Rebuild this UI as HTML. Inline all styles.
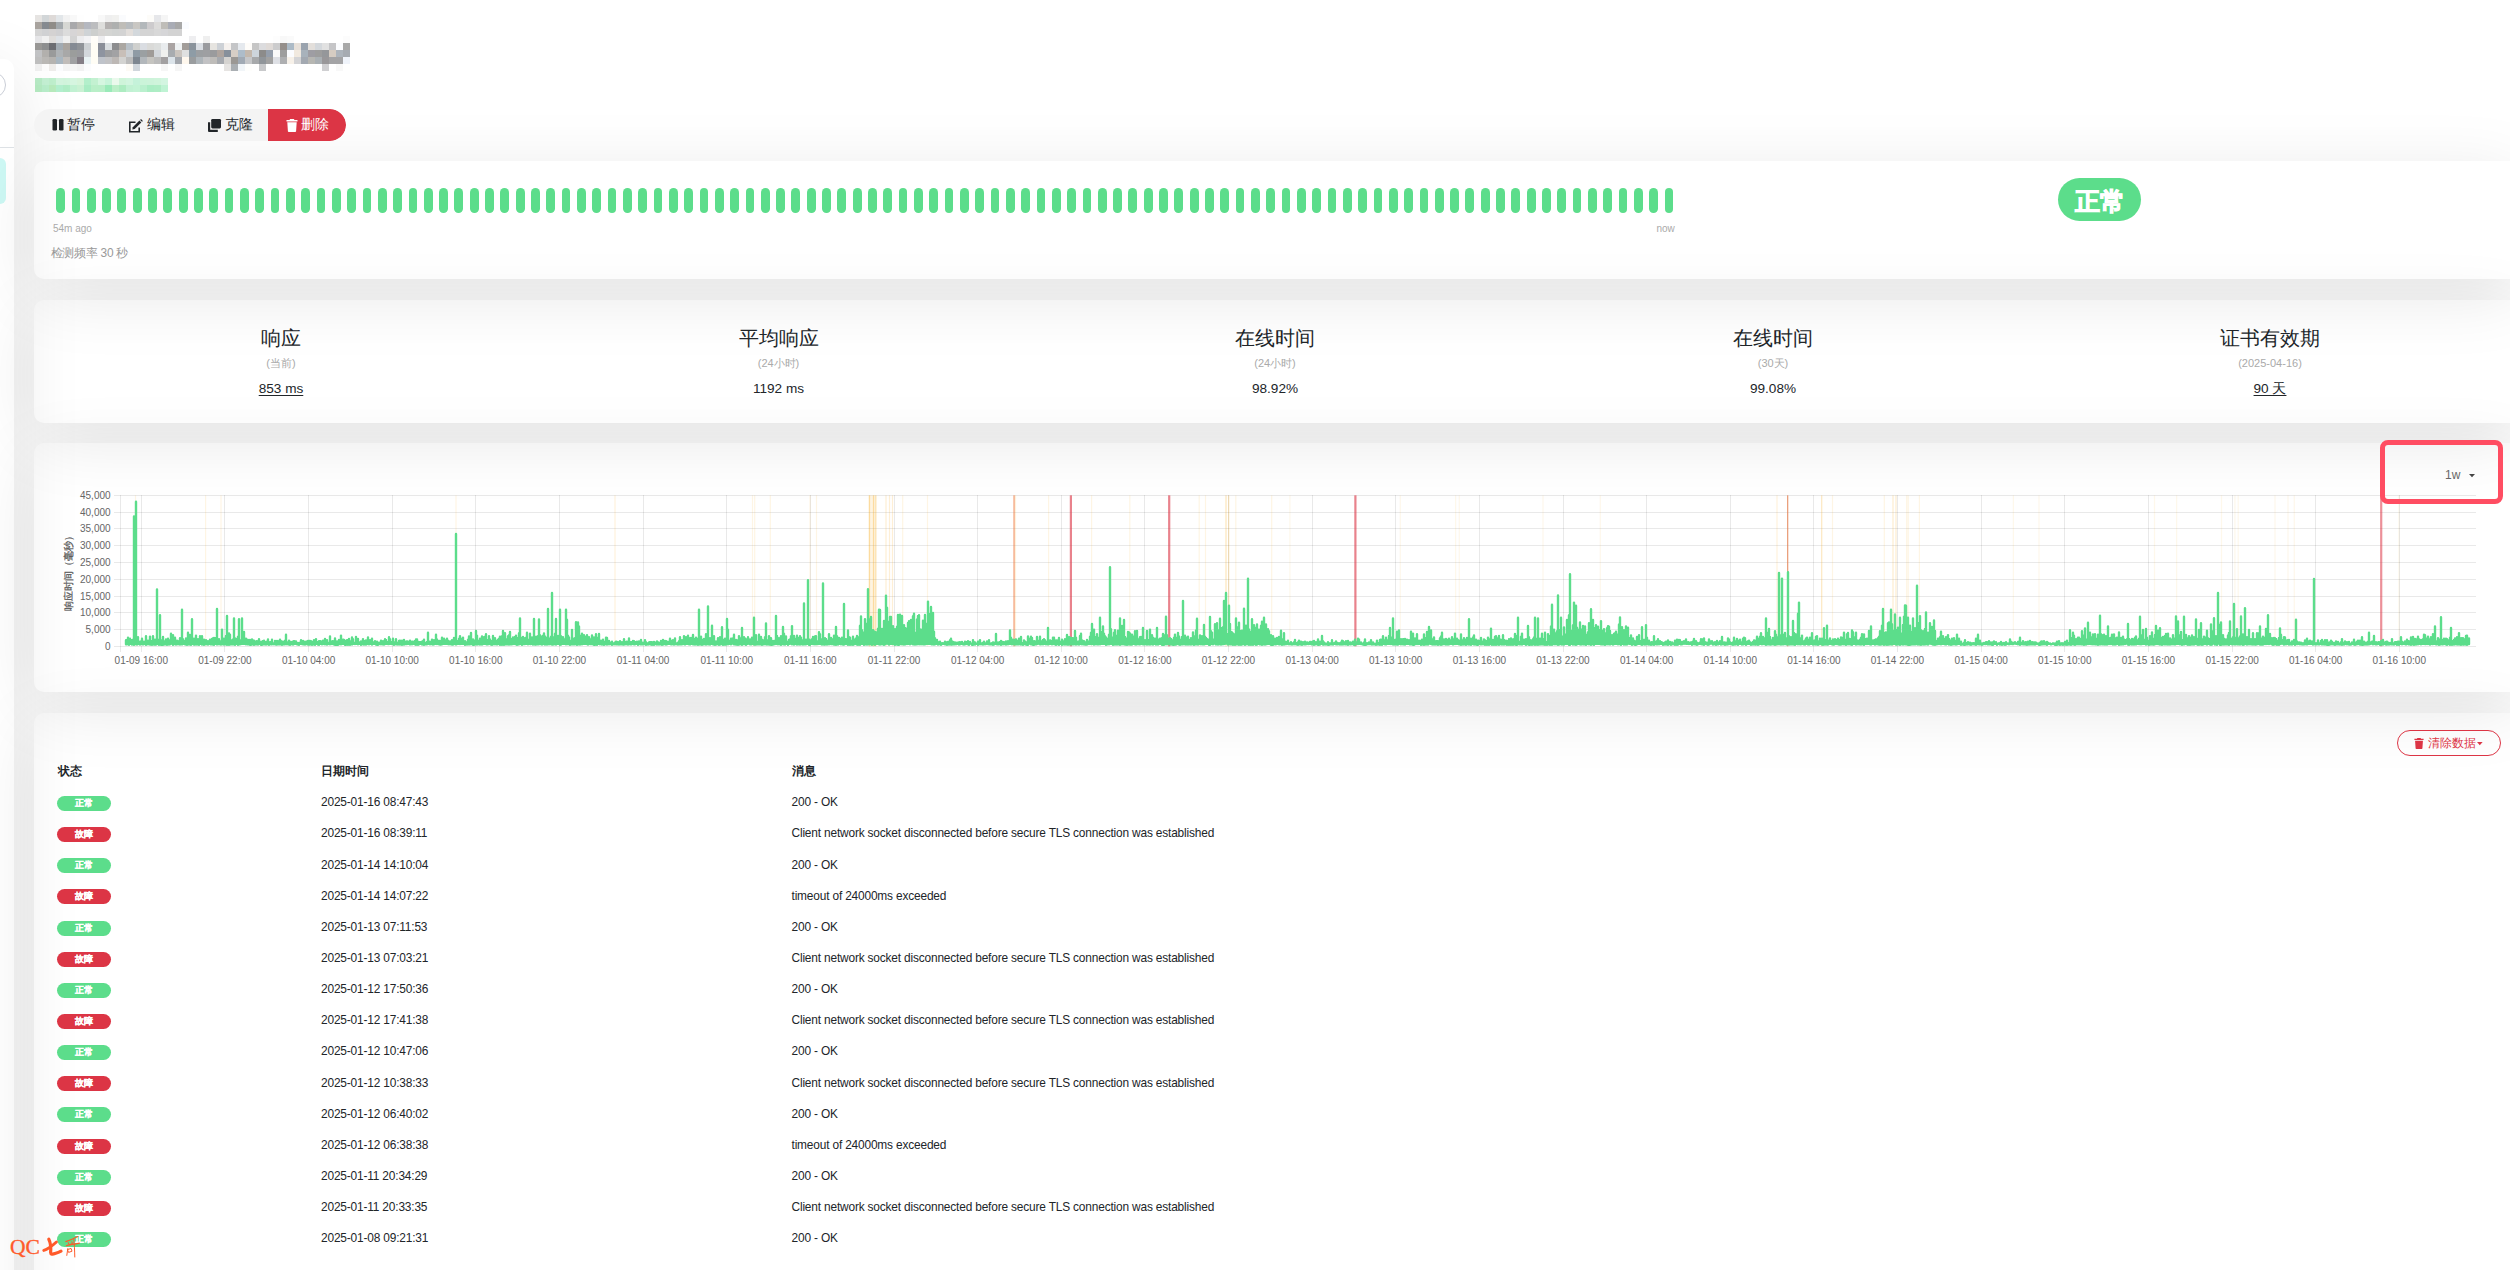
<!DOCTYPE html>
<html><head><meta charset="utf-8">
<style>
html,body{margin:0;padding:0}
body{width:2510px;height:1270px;overflow:hidden;position:relative;background:#fff;font-family:"Liberation Sans",sans-serif;color:#212529}
.abs{position:absolute}
.card{position:absolute;left:34px;width:2486px;background:#fff;border-radius:10px;z-index:2}
.shd{position:absolute;left:34px;width:2486px;border-radius:10px;box-shadow:0 15px 70px rgba(0,0,0,.1);z-index:8}
#list{position:absolute;left:-400px;top:59px;width:414px;height:1400px;background:#fff;border-radius:10px;overflow:hidden;z-index:1}
#lshd{position:absolute;left:-400px;top:59px;width:414px;height:1400px;border-radius:10px;box-shadow:0 15px 70px rgba(0,0,0,.1);z-index:8}
.beats i{position:absolute;top:188px;width:8.8px;height:25px;border-radius:4.4px;background:#5cdd8b}
.btng{position:absolute;left:34px;top:109px;width:312px;height:32px;border-radius:16px;background:#f4f4f4;overflow:hidden;z-index:9}
.btng span{position:absolute;top:0;height:32px;line-height:32px;font-size:13.6px;color:#212529}
.badge{position:absolute;left:57px;width:54px;height:15px;border-radius:8px;color:#fff;font-size:8.8px;font-weight:bold;text-align:center;line-height:15.5px;-webkit-text-stroke:0.25px #fff}
.bu{background:#5cdd8b}.bd{background:#dc3545}
.td{position:absolute;font-size:11.9px;line-height:15px;color:#212529;white-space:nowrap;letter-spacing:-0.17px}
.th{position:absolute;top:764px;font-size:11.9px;line-height:15px;font-weight:bold;white-space:nowrap}
.st{position:absolute;width:300px;text-align:center}
.st .t{position:absolute;left:0;width:300px;top:0;font-size:20.4px;line-height:24px}
.st .s{position:absolute;left:0;width:300px;top:29.5px;font-size:11px;line-height:14px;color:#aaa}
.st .v{position:absolute;left:0;width:300px;top:53.5px;font-size:13.6px;line-height:18px}
.st .v u{text-underline-offset:2px}
</style></head><body>
<div id="list">
  <div class="abs" style="left:0;top:13px;width:403.6px;height:23.5px;border:1px solid #c9cdd6;border-radius:14px"></div>
  <div class="abs" style="left:0;top:88px;width:414px;height:1px;background:#dee2e6"></div>
  <div class="abs" style="left:0;top:99px;width:406px;height:46px;background:#cdf8f4;border-radius:6px"></div>
</div>
<svg width="330" height="90" style="position:absolute;left:35px;top:15px" shape-rendering="crispEdges"><rect x="0" y="0" width="7" height="7" fill="#e6e4e2"/><rect x="7" y="0" width="7" height="7" fill="#d2d6d8"/><rect x="14" y="0" width="7" height="7" fill="#dedad8"/><rect x="21" y="0" width="7" height="7" fill="#e2e6e9"/><rect x="28" y="0" width="7" height="7" fill="#f2f2f2"/><rect x="35" y="0" width="7" height="7" fill="#f8f8f8"/><rect x="42" y="0" width="7" height="7" fill="#fefefe"/><rect x="63" y="0" width="7" height="7" fill="#f8f8f8"/><rect x="70" y="0" width="7" height="7" fill="#efefef"/><rect x="77" y="0" width="7" height="7" fill="#f1f1ef"/><rect x="84" y="0" width="7" height="7" fill="#fafbfd"/><rect x="112" y="0" width="7" height="7" fill="#fdfcf9"/><rect x="119" y="0" width="7" height="7" fill="#e6e7ea"/><rect x="126" y="0" width="7" height="7" fill="#f5f5f5"/><rect x="0" y="7" width="7" height="7" fill="#a8a39e"/><rect x="7" y="7" width="7" height="7" fill="#858a90"/><rect x="14" y="7" width="7" height="7" fill="#8f8c88"/><rect x="21" y="7" width="7" height="7" fill="#a3a9ad"/><rect x="28" y="7" width="7" height="7" fill="#d6d7d3"/><rect x="35" y="7" width="7" height="7" fill="#a9a9ab"/><rect x="42" y="7" width="7" height="7" fill="#b9b5b1"/><rect x="49" y="7" width="7" height="7" fill="#b5b8c0"/><rect x="56" y="7" width="7" height="7" fill="#bcbdbf"/><rect x="63" y="7" width="7" height="7" fill="#dededc"/><rect x="70" y="7" width="7" height="7" fill="#b4b1b0"/><rect x="77" y="7" width="7" height="7" fill="#aeb0af"/><rect x="84" y="7" width="7" height="7" fill="#bfbdb8"/><rect x="91" y="7" width="7" height="7" fill="#b8bcbf"/><rect x="98" y="7" width="7" height="7" fill="#c9c7c3"/><rect x="105" y="7" width="7" height="7" fill="#b3b8bb"/><rect x="112" y="7" width="7" height="7" fill="#cdcbcd"/><rect x="119" y="7" width="7" height="7" fill="#dcdbda"/><rect x="126" y="7" width="7" height="7" fill="#bfbdb8"/><rect x="133" y="7" width="7" height="7" fill="#a9acb5"/><rect x="140" y="7" width="7" height="7" fill="#a8a8a8"/><rect x="147" y="7" width="7" height="7" fill="#fafcff"/><rect x="0" y="14" width="7" height="7" fill="#d5d5d5"/><rect x="7" y="14" width="7" height="7" fill="#d0d1d3"/><rect x="14" y="14" width="7" height="7" fill="#d4d2d2"/><rect x="21" y="14" width="7" height="7" fill="#d0d0d2"/><rect x="28" y="14" width="7" height="7" fill="#dcdcdc"/><rect x="35" y="14" width="7" height="7" fill="#d7d5d6"/><rect x="42" y="14" width="7" height="7" fill="#dad6d3"/><rect x="49" y="14" width="7" height="7" fill="#cfd3d6"/><rect x="56" y="14" width="7" height="7" fill="#cdcfcd"/><rect x="63" y="14" width="7" height="7" fill="#d5d4d2"/><rect x="70" y="14" width="7" height="7" fill="#d4d5d3"/><rect x="77" y="14" width="7" height="7" fill="#d1d3d2"/><rect x="84" y="14" width="7" height="7" fill="#d3d3d3"/><rect x="91" y="14" width="7" height="7" fill="#e2dedb"/><rect x="98" y="14" width="7" height="7" fill="#d3d8dc"/><rect x="105" y="14" width="7" height="7" fill="#d4d4d4"/><rect x="112" y="14" width="7" height="7" fill="#d4d4d4"/><rect x="119" y="14" width="7" height="7" fill="#d8d8d8"/><rect x="126" y="14" width="7" height="7" fill="#d6d6d8"/><rect x="133" y="14" width="7" height="7" fill="#d3d3d3"/><rect x="140" y="14" width="7" height="7" fill="#d3d3d3"/><rect x="0" y="21" width="7" height="7" fill="#e6e6e8"/><rect x="7" y="21" width="7" height="7" fill="#f0f0f0"/><rect x="14" y="21" width="7" height="7" fill="#dfdddb"/><rect x="21" y="21" width="7" height="7" fill="#dde1e6"/><rect x="28" y="21" width="7" height="7" fill="#efefef"/><rect x="35" y="21" width="7" height="7" fill="#d3d3d3"/><rect x="42" y="21" width="7" height="7" fill="#ececee"/><rect x="49" y="21" width="7" height="7" fill="#f3f3f5"/><rect x="56" y="21" width="7" height="7" fill="#fffdf8"/><rect x="63" y="21" width="7" height="7" fill="#ededef"/><rect x="154" y="21" width="7" height="7" fill="#eeeef0"/><rect x="168" y="21" width="7" height="7" fill="#efefef"/><rect x="238" y="21" width="7" height="7" fill="#fdfdfd"/><rect x="245" y="21" width="7" height="7" fill="#f8f8f8"/><rect x="252" y="21" width="7" height="7" fill="#fafafa"/><rect x="308" y="21" width="7" height="7" fill="#fcfcfc"/><rect x="0" y="28" width="7" height="7" fill="#999896"/><rect x="7" y="28" width="7" height="7" fill="#8e8f90"/><rect x="14" y="28" width="7" height="7" fill="#6c6d72"/><rect x="21" y="28" width="7" height="7" fill="#a1aab2"/><rect x="28" y="28" width="7" height="7" fill="#a9a49f"/><rect x="35" y="28" width="7" height="7" fill="#858b94"/><rect x="42" y="28" width="7" height="7" fill="#8f9398"/><rect x="49" y="28" width="7" height="7" fill="#cdd1d4"/><rect x="56" y="28" width="7" height="7" fill="#fffdf5"/><rect x="63" y="28" width="7" height="7" fill="#8a8e98"/><rect x="70" y="28" width="7" height="7" fill="#d9dde0"/><rect x="77" y="28" width="7" height="7" fill="#8c8d8f"/><rect x="84" y="28" width="7" height="7" fill="#aba7a2"/><rect x="91" y="28" width="7" height="7" fill="#b8c0c7"/><rect x="98" y="28" width="7" height="7" fill="#cfd0ce"/><rect x="105" y="28" width="7" height="7" fill="#dadde2"/><rect x="112" y="28" width="7" height="7" fill="#dadad8"/><rect x="119" y="28" width="7" height="7" fill="#dcdedd"/><rect x="126" y="28" width="7" height="7" fill="#e9ecee"/><rect x="133" y="28" width="7" height="7" fill="#aaa4a3"/><rect x="140" y="28" width="7" height="7" fill="#eef1f2"/><rect x="147" y="28" width="7" height="7" fill="#a29d99"/><rect x="154" y="28" width="7" height="7" fill="#8a939c"/><rect x="161" y="28" width="7" height="7" fill="#d9dde3"/><rect x="168" y="28" width="7" height="7" fill="#9a9b9f"/><rect x="175" y="28" width="7" height="7" fill="#e6e4e0"/><rect x="182" y="28" width="7" height="7" fill="#cdd1d6"/><rect x="189" y="28" width="7" height="7" fill="#f5f1ee"/><rect x="196" y="28" width="7" height="7" fill="#c4c5c7"/><rect x="203" y="28" width="7" height="7" fill="#e5e9ee"/><rect x="210" y="28" width="7" height="7" fill="#fefcf9"/><rect x="217" y="28" width="7" height="7" fill="#c6c6c6"/><rect x="224" y="28" width="7" height="7" fill="#dcdcde"/><rect x="231" y="28" width="7" height="7" fill="#dfdad7"/><rect x="238" y="28" width="7" height="7" fill="#cccccd"/><rect x="245" y="28" width="7" height="7" fill="#958f8b"/><rect x="252" y="28" width="7" height="7" fill="#acbac6"/><rect x="259" y="28" width="7" height="7" fill="#e7e0d9"/><rect x="266" y="28" width="7" height="7" fill="#9aa3ae"/><rect x="273" y="28" width="7" height="7" fill="#e3dfdb"/><rect x="280" y="28" width="7" height="7" fill="#d4d8dc"/><rect x="287" y="28" width="7" height="7" fill="#e1e1e1"/><rect x="294" y="28" width="7" height="7" fill="#c5c5c7"/><rect x="301" y="28" width="7" height="7" fill="#fbfcfe"/><rect x="308" y="28" width="7" height="7" fill="#a8a8a8"/><rect x="0" y="35" width="7" height="7" fill="#c2c3c5"/><rect x="7" y="35" width="7" height="7" fill="#b3b1ae"/><rect x="14" y="35" width="7" height="7" fill="#9a9b9b"/><rect x="21" y="35" width="7" height="7" fill="#afb3b6"/><rect x="28" y="35" width="7" height="7" fill="#a8a8a8"/><rect x="35" y="35" width="7" height="7" fill="#9b9d9c"/><rect x="42" y="35" width="7" height="7" fill="#9a9b9f"/><rect x="49" y="35" width="7" height="7" fill="#d3d7dc"/><rect x="56" y="35" width="7" height="7" fill="#fffdf5"/><rect x="63" y="35" width="7" height="7" fill="#8e94a0"/><rect x="70" y="35" width="7" height="7" fill="#9c9d9f"/><rect x="77" y="35" width="7" height="7" fill="#a2a2a4"/><rect x="84" y="35" width="7" height="7" fill="#c8bfb8"/><rect x="91" y="35" width="7" height="7" fill="#cbd0d4"/><rect x="98" y="35" width="7" height="7" fill="#8f9ba5"/><rect x="105" y="35" width="7" height="7" fill="#9ba0a2"/><rect x="112" y="35" width="7" height="7" fill="#9f9b98"/><rect x="119" y="35" width="7" height="7" fill="#d3d7dc"/><rect x="126" y="35" width="7" height="7" fill="#eff0ee"/><rect x="133" y="35" width="7" height="7" fill="#a8acb0"/><rect x="140" y="35" width="7" height="7" fill="#cbc5bf"/><rect x="147" y="35" width="7" height="7" fill="#dfe0e0"/><rect x="154" y="35" width="7" height="7" fill="#8e9ca6"/><rect x="161" y="35" width="7" height="7" fill="#9c9fa2"/><rect x="168" y="35" width="7" height="7" fill="#9e9fa2"/><rect x="175" y="35" width="7" height="7" fill="#9a9b9d"/><rect x="182" y="35" width="7" height="7" fill="#aea49e"/><rect x="189" y="35" width="7" height="7" fill="#87909b"/><rect x="196" y="35" width="7" height="7" fill="#d7cec5"/><rect x="203" y="35" width="7" height="7" fill="#adbcc9"/><rect x="210" y="35" width="7" height="7" fill="#c3b8ad"/><rect x="217" y="35" width="7" height="7" fill="#cdd5dc"/><rect x="224" y="35" width="7" height="7" fill="#8c8b8a"/><rect x="231" y="35" width="7" height="7" fill="#959eab"/><rect x="238" y="35" width="7" height="7" fill="#fafafa"/><rect x="245" y="35" width="7" height="7" fill="#9e9e9e"/><rect x="252" y="35" width="7" height="7" fill="#fbfcff"/><rect x="259" y="35" width="7" height="7" fill="#f1e9df"/><rect x="266" y="35" width="7" height="7" fill="#a8b2bb"/><rect x="273" y="35" width="7" height="7" fill="#9e9da3"/><rect x="280" y="35" width="7" height="7" fill="#9d9d9d"/><rect x="287" y="35" width="7" height="7" fill="#95979a"/><rect x="294" y="35" width="7" height="7" fill="#d6ccc2"/><rect x="301" y="35" width="7" height="7" fill="#adb4bc"/><rect x="308" y="35" width="7" height="7" fill="#a6abb2"/><rect x="0" y="42" width="7" height="7" fill="#c0c0c0"/><rect x="7" y="42" width="7" height="7" fill="#bbb9b6"/><rect x="14" y="42" width="7" height="7" fill="#b6b4b1"/><rect x="21" y="42" width="7" height="7" fill="#a9b6c0"/><rect x="28" y="42" width="7" height="7" fill="#c0bcb9"/><rect x="35" y="42" width="7" height="7" fill="#a0a1a3"/><rect x="42" y="42" width="7" height="7" fill="#847e86"/><rect x="49" y="42" width="7" height="7" fill="#eaf3f5"/><rect x="56" y="42" width="7" height="7" fill="#fffdf5"/><rect x="63" y="42" width="7" height="7" fill="#bfc3ca"/><rect x="70" y="42" width="7" height="7" fill="#c2c2c4"/><rect x="77" y="42" width="7" height="7" fill="#bdb8b5"/><rect x="84" y="42" width="7" height="7" fill="#d3d3d1"/><rect x="91" y="42" width="7" height="7" fill="#bbbbbb"/><rect x="98" y="42" width="7" height="7" fill="#7d8690"/><rect x="105" y="42" width="7" height="7" fill="#b2b7bb"/><rect x="112" y="42" width="7" height="7" fill="#c5c4c0"/><rect x="119" y="42" width="7" height="7" fill="#bbbbbb"/><rect x="126" y="42" width="7" height="7" fill="#a2a0a1"/><rect x="133" y="42" width="7" height="7" fill="#dce4ea"/><rect x="140" y="42" width="7" height="7" fill="#a3a7ad"/><rect x="147" y="42" width="7" height="7" fill="#fff8ee"/><rect x="154" y="42" width="7" height="7" fill="#9a9d9f"/><rect x="161" y="42" width="7" height="7" fill="#adb4b9"/><rect x="168" y="42" width="7" height="7" fill="#c2c2c4"/><rect x="175" y="42" width="7" height="7" fill="#bebcb9"/><rect x="182" y="42" width="7" height="7" fill="#a6a9ae"/><rect x="189" y="42" width="7" height="7" fill="#d5d3d0"/><rect x="196" y="42" width="7" height="7" fill="#9b9894"/><rect x="203" y="42" width="7" height="7" fill="#a1aab4"/><rect x="210" y="42" width="7" height="7" fill="#c6c7c9"/><rect x="217" y="42" width="7" height="7" fill="#a7a9ab"/><rect x="224" y="42" width="7" height="7" fill="#90959a"/><rect x="231" y="42" width="7" height="7" fill="#a1a1a1"/><rect x="238" y="42" width="7" height="7" fill="#dee0e5"/><rect x="245" y="42" width="7" height="7" fill="#aeafb1"/><rect x="252" y="42" width="7" height="7" fill="#f7f1e9"/><rect x="259" y="42" width="7" height="7" fill="#d4d4d6"/><rect x="266" y="42" width="7" height="7" fill="#a3a9b1"/><rect x="273" y="42" width="7" height="7" fill="#b6b6b2"/><rect x="280" y="42" width="7" height="7" fill="#a9afb3"/><rect x="287" y="42" width="7" height="7" fill="#999799"/><rect x="294" y="42" width="7" height="7" fill="#a3a3a5"/><rect x="301" y="42" width="7" height="7" fill="#a3a3a5"/><rect x="308" y="42" width="7" height="7" fill="#f0f4fb"/><rect x="0" y="49" width="7" height="7" fill="#f1f1f1"/><rect x="7" y="49" width="7" height="7" fill="#fdfdfd"/><rect x="14" y="49" width="7" height="7" fill="#efedeb"/><rect x="21" y="49" width="7" height="7" fill="#fbfcfe"/><rect x="28" y="49" width="7" height="7" fill="#f4f4f4"/><rect x="35" y="49" width="7" height="7" fill="#f6f6f6"/><rect x="42" y="49" width="7" height="7" fill="#f2f2f2"/><rect x="49" y="49" width="7" height="7" fill="#fbfcfd"/><rect x="91" y="49" width="7" height="7" fill="#fdfaf5"/><rect x="98" y="49" width="7" height="7" fill="#d0d6dc"/><rect x="126" y="49" width="7" height="7" fill="#f6f6f6"/><rect x="140" y="49" width="7" height="7" fill="#f5f5f5"/><rect x="189" y="49" width="7" height="7" fill="#e6e4e2"/><rect x="196" y="49" width="7" height="7" fill="#aaafb3"/><rect x="203" y="49" width="7" height="7" fill="#f1f5f8"/><rect x="210" y="49" width="7" height="7" fill="#fefefc"/><rect x="224" y="49" width="7" height="7" fill="#c8c9cb"/><rect x="287" y="49" width="7" height="7" fill="#d0d0d2"/><rect x="301" y="49" width="7" height="7" fill="#f8f8f8"/><rect x="0" y="63" width="7" height="7" fill="#b8ebc6"/><rect x="7" y="63" width="7" height="7" fill="#c4f0d3"/><rect x="14" y="63" width="7" height="7" fill="#bfefcd"/><rect x="21" y="63" width="7" height="7" fill="#d3f4de"/><rect x="28" y="63" width="7" height="7" fill="#d1f4dc"/><rect x="35" y="63" width="7" height="7" fill="#d6f5e0"/><rect x="42" y="63" width="7" height="7" fill="#d6f4da"/><rect x="49" y="63" width="7" height="7" fill="#b3efcb"/><rect x="56" y="63" width="7" height="7" fill="#c3f1d1"/><rect x="63" y="63" width="7" height="7" fill="#d5f6e0"/><rect x="70" y="63" width="7" height="7" fill="#c8f4da"/><rect x="77" y="63" width="7" height="7" fill="#eaf9ec"/><rect x="84" y="63" width="7" height="7" fill="#cff4da"/><rect x="91" y="63" width="7" height="7" fill="#d2f5df"/><rect x="98" y="63" width="7" height="7" fill="#c5f2da"/><rect x="105" y="63" width="7" height="7" fill="#cbf4d9"/><rect x="112" y="63" width="7" height="7" fill="#cdf3da"/><rect x="119" y="63" width="7" height="7" fill="#cff4db"/><rect x="126" y="63" width="7" height="7" fill="#d3f5e1"/><rect x="0" y="70" width="7" height="7" fill="#b5ebc2"/><rect x="7" y="70" width="7" height="7" fill="#b9eecb"/><rect x="14" y="70" width="7" height="7" fill="#b8ebbd"/><rect x="21" y="70" width="7" height="7" fill="#b3efce"/><rect x="28" y="70" width="7" height="7" fill="#b0edc6"/><rect x="35" y="70" width="7" height="7" fill="#c1f1d2"/><rect x="42" y="70" width="7" height="7" fill="#c9f1d3"/><rect x="49" y="70" width="7" height="7" fill="#a9ecc4"/><rect x="56" y="70" width="7" height="7" fill="#b9efc8"/><rect x="63" y="70" width="7" height="7" fill="#b8efc8"/><rect x="70" y="70" width="7" height="7" fill="#9aeab9"/><rect x="77" y="70" width="7" height="7" fill="#bbefc8"/><rect x="84" y="70" width="7" height="7" fill="#adecc1"/><rect x="91" y="70" width="7" height="7" fill="#c1f1d3"/><rect x="98" y="70" width="7" height="7" fill="#c3f3d5"/><rect x="105" y="70" width="7" height="7" fill="#baf0ce"/><rect x="112" y="70" width="7" height="7" fill="#abedc4"/><rect x="119" y="70" width="7" height="7" fill="#aeedc5"/><rect x="126" y="70" width="7" height="7" fill="#bff3d4"/></svg>
<div class="btng">
  <span style="left:17px"><svg width="13" height="12" style="position:absolute;left:0.5px;top:10px" viewBox="0 0 13 12"><rect x="0.5" y="0" width="4.5" height="11.5" rx="1.2" fill="#212529"/><rect x="7" y="0" width="4.5" height="11.5" rx="1.2" fill="#212529"/></svg><b style="position:absolute;left:16px;font-weight:normal;white-space:nowrap">暂停</b></span>
  <span style="left:94px"><svg width="16" height="14" style="position:absolute;left:0;top:9.5px" viewBox="0 0 16 14"><path d="M1 2.5h6.5v1.6H2.6v7.8h7.8V8.5H12v5H1z" fill="#212529"/><path d="M4.8 8.2l6.6-6.6 1.9 1.9-6.6 6.6-2.4.5z" fill="#212529"/><path d="M12.1 0.9l0.9-0.9 1.9 1.9-0.9 0.9z" fill="#212529"/></svg><b style="position:absolute;left:18.8px;font-weight:normal;white-space:nowrap">编辑</b></span>
  <span style="left:174px"><svg width="14" height="13" style="position:absolute;left:0;top:10px" viewBox="0 0 14 13"><rect x="3.2" y="0" width="9.8" height="9.4" rx="1.3" fill="#212529"/><path d="M0 3.2h2.2v7.6h7.6V13H1.3C.6 13 0 12.4 0 11.7z" fill="#212529"/></svg><b style="position:absolute;left:17px;font-weight:normal;white-space:nowrap">克隆</b></span>
  <div class="abs" style="left:234px;top:0;width:78px;height:32px;background:#dc3545;border-radius:0 16px 16px 0"></div>
  <span style="left:252px;color:#fff"><svg width="12" height="13" style="position:absolute;left:0;top:9.5px" viewBox="0 0 12 13"><path d="M3.6 0.9L4 0h4l.4.9H11.5v1.5H.5V.9z" fill="#fff"/><path d="M1.3 3.2h9.4l-.6 9c0 .5-.4.8-.9.8H2.8c-.5 0-.9-.3-.9-.8z" fill="#fff"/></svg><b style="position:absolute;left:15px;font-weight:normal;white-space:nowrap;color:#fff">删除</b></span>
</div>

<div class="card" style="top:161px;height:118px"></div>
<div class="card" style="top:300px;height:123px"></div>
<div class="card" style="top:443px;height:249px"></div>
<div class="card" style="top:713px;height:700px"></div>
<div id="lshd"></div>
<div class="shd" style="top:161px;height:118px"></div>
<div class="shd" style="top:300px;height:123px"></div>
<div class="shd" style="top:443px;height:249px"></div>
<div class="shd" style="top:713px;height:700px"></div>

<div class="abs" style="left:0;top:0;width:2510px;height:1270px;z-index:10">
<div class="beats"><i style="left:56.20px"></i><i style="left:71.52px"></i><i style="left:86.84px"></i><i style="left:102.15px"></i><i style="left:117.47px"></i><i style="left:132.79px"></i><i style="left:148.11px"></i><i style="left:163.43px"></i><i style="left:178.74px"></i><i style="left:194.06px"></i><i style="left:209.38px"></i><i style="left:224.70px"></i><i style="left:240.02px"></i><i style="left:255.33px"></i><i style="left:270.65px"></i><i style="left:285.97px"></i><i style="left:301.29px"></i><i style="left:316.61px"></i><i style="left:331.92px"></i><i style="left:347.24px"></i><i style="left:362.56px"></i><i style="left:377.88px"></i><i style="left:393.20px"></i><i style="left:408.51px"></i><i style="left:423.83px"></i><i style="left:439.15px"></i><i style="left:454.47px"></i><i style="left:469.79px"></i><i style="left:485.10px"></i><i style="left:500.42px"></i><i style="left:515.74px"></i><i style="left:531.06px"></i><i style="left:546.38px"></i><i style="left:561.69px"></i><i style="left:577.01px"></i><i style="left:592.33px"></i><i style="left:607.65px"></i><i style="left:622.97px"></i><i style="left:638.28px"></i><i style="left:653.60px"></i><i style="left:668.92px"></i><i style="left:684.24px"></i><i style="left:699.56px"></i><i style="left:714.87px"></i><i style="left:730.19px"></i><i style="left:745.51px"></i><i style="left:760.83px"></i><i style="left:776.15px"></i><i style="left:791.46px"></i><i style="left:806.78px"></i><i style="left:822.10px"></i><i style="left:837.42px"></i><i style="left:852.74px"></i><i style="left:868.05px"></i><i style="left:883.37px"></i><i style="left:898.69px"></i><i style="left:914.01px"></i><i style="left:929.33px"></i><i style="left:944.64px"></i><i style="left:959.96px"></i><i style="left:975.28px"></i><i style="left:990.60px"></i><i style="left:1005.92px"></i><i style="left:1021.23px"></i><i style="left:1036.55px"></i><i style="left:1051.87px"></i><i style="left:1067.19px"></i><i style="left:1082.51px"></i><i style="left:1097.82px"></i><i style="left:1113.14px"></i><i style="left:1128.46px"></i><i style="left:1143.78px"></i><i style="left:1159.10px"></i><i style="left:1174.41px"></i><i style="left:1189.73px"></i><i style="left:1205.05px"></i><i style="left:1220.37px"></i><i style="left:1235.69px"></i><i style="left:1251.00px"></i><i style="left:1266.32px"></i><i style="left:1281.64px"></i><i style="left:1296.96px"></i><i style="left:1312.28px"></i><i style="left:1327.59px"></i><i style="left:1342.91px"></i><i style="left:1358.23px"></i><i style="left:1373.55px"></i><i style="left:1388.87px"></i><i style="left:1404.18px"></i><i style="left:1419.50px"></i><i style="left:1434.82px"></i><i style="left:1450.14px"></i><i style="left:1465.46px"></i><i style="left:1480.77px"></i><i style="left:1496.09px"></i><i style="left:1511.41px"></i><i style="left:1526.73px"></i><i style="left:1542.05px"></i><i style="left:1557.36px"></i><i style="left:1572.68px"></i><i style="left:1588.00px"></i><i style="left:1603.32px"></i><i style="left:1618.64px"></i><i style="left:1633.95px"></i><i style="left:1649.27px"></i><i style="left:1664.59px"></i></div>
<div class="abs" style="left:53px;top:223px;font-size:10px;line-height:12px;color:#aaa">54m ago</div>
<div class="abs" style="left:1656.5px;top:223px;font-size:10px;line-height:12px;color:#aaa">now</div>
<div class="abs" style="left:50.5px;top:245.5px;font-size:11.9px;line-height:15px;color:#999;white-space:nowrap;letter-spacing:-0.25px">检测频率 30 秒</div>
<div class="abs" style="left:2058px;top:178px;width:83px;height:43px;border-radius:22px;background:#5cdd8b;color:#fff;font-weight:bold;font-size:24.5px;line-height:47px;text-align:center;-webkit-text-stroke:0.9px #fff">正常</div>

<div class="st" style="left:131px;top:326px"><div class="t">响应</div><div class="s">(当前)</div><div class="v"><u>853 ms</u></div></div>
<div class="st" style="left:628.5px;top:326px"><div class="t">平均响应</div><div class="s">(24小时)</div><div class="v">1192 ms</div></div>
<div class="st" style="left:1125px;top:326px"><div class="t">在线时间</div><div class="s">(24小时)</div><div class="v">98.92%</div></div>
<div class="st" style="left:1623px;top:326px"><div class="t">在线时间</div><div class="s">(30天)</div><div class="v">99.08%</div></div>
<div class="st" style="left:2120px;top:326px"><div class="t">证书有效期</div><div class="s">(2025-04-16)</div><div class="v"><u>90 天</u></div></div>

<svg width="2510" height="1270" style="position:absolute;left:0;top:0"><g stroke="rgba(0,0,0,0.085)" stroke-width="1" shape-rendering="crispEdges"><line x1="113.8" y1="495.3" x2="2476" y2="495.3"/><line x1="113.8" y1="512.1" x2="2476" y2="512.1"/><line x1="113.8" y1="528.9" x2="2476" y2="528.9"/><line x1="113.8" y1="545.6" x2="2476" y2="545.6"/><line x1="113.8" y1="562.4" x2="2476" y2="562.4"/><line x1="113.8" y1="579.2" x2="2476" y2="579.2"/><line x1="113.8" y1="596.0" x2="2476" y2="596.0"/><line x1="113.8" y1="612.8" x2="2476" y2="612.8"/><line x1="113.8" y1="629.5" x2="2476" y2="629.5"/><line x1="113.8" y1="646.3" x2="2476" y2="646.3"/><line x1="120.4" y1="495.3" x2="120.4" y2="652"/><line x1="141.3" y1="495.3" x2="141.3" y2="652"/><line x1="224.9" y1="495.3" x2="224.9" y2="652"/><line x1="308.6" y1="495.3" x2="308.6" y2="652"/><line x1="392.2" y1="495.3" x2="392.2" y2="652"/><line x1="475.8" y1="495.3" x2="475.8" y2="652"/><line x1="559.5" y1="495.3" x2="559.5" y2="652"/><line x1="643.1" y1="495.3" x2="643.1" y2="652"/><line x1="726.7" y1="495.3" x2="726.7" y2="652"/><line x1="810.3" y1="495.3" x2="810.3" y2="652"/><line x1="894.0" y1="495.3" x2="894.0" y2="652"/><line x1="977.6" y1="495.3" x2="977.6" y2="652"/><line x1="1061.2" y1="495.3" x2="1061.2" y2="652"/><line x1="1144.9" y1="495.3" x2="1144.9" y2="652"/><line x1="1228.5" y1="495.3" x2="1228.5" y2="652"/><line x1="1312.1" y1="495.3" x2="1312.1" y2="652"/><line x1="1395.7" y1="495.3" x2="1395.7" y2="652"/><line x1="1479.4" y1="495.3" x2="1479.4" y2="652"/><line x1="1563.0" y1="495.3" x2="1563.0" y2="652"/><line x1="1646.6" y1="495.3" x2="1646.6" y2="652"/><line x1="1730.3" y1="495.3" x2="1730.3" y2="652"/><line x1="1813.9" y1="495.3" x2="1813.9" y2="652"/><line x1="1897.5" y1="495.3" x2="1897.5" y2="652"/><line x1="1981.2" y1="495.3" x2="1981.2" y2="652"/><line x1="2064.8" y1="495.3" x2="2064.8" y2="652"/><line x1="2148.4" y1="495.3" x2="2148.4" y2="652"/><line x1="2232.1" y1="495.3" x2="2232.1" y2="652"/><line x1="2315.7" y1="495.3" x2="2315.7" y2="652"/><line x1="2399.3" y1="495.3" x2="2399.3" y2="652"/></g><rect x="134.9" y="495.3" width="1.2" height="151" fill="rgba(248,163,6,0.11)"/><rect x="205.0" y="495.3" width="1.2" height="151" fill="rgba(248,163,6,0.11)"/><rect x="220.4" y="495.3" width="1.2" height="151" fill="rgba(248,163,6,0.11)"/><rect x="455.4" y="495.3" width="1.2" height="151" fill="rgba(248,163,6,0.11)"/><rect x="614.4" y="495.3" width="1.2" height="151" fill="rgba(248,163,6,0.14)"/><rect x="751.9" y="495.3" width="1.2" height="151" fill="rgba(248,163,6,0.11)"/><rect x="754.1" y="495.3" width="1.2" height="151" fill="rgba(248,163,6,0.11)"/><rect x="769.7" y="495.3" width="1.2" height="151" fill="rgba(248,163,6,0.11)"/><rect x="809.4" y="495.3" width="1.2" height="151" fill="rgba(248,163,6,0.11)"/><rect x="815.9" y="495.3" width="1.2" height="151" fill="rgba(248,163,6,0.11)"/><rect x="868.9" y="495.3" width="1.2" height="151" fill="rgba(248,163,6,0.30)"/><rect x="872.9" y="495.3" width="1.2" height="151" fill="rgba(248,163,6,0.30)"/><rect x="874.9" y="495.3" width="1.2" height="151" fill="rgba(248,163,6,0.19)"/><rect x="885.4" y="495.3" width="1.2" height="151" fill="rgba(248,163,6,0.17)"/><rect x="888.9" y="495.3" width="1.2" height="151" fill="rgba(248,163,6,0.17)"/><rect x="891.9" y="495.3" width="1.2" height="151" fill="rgba(248,163,6,0.17)"/><rect x="902.1" y="495.3" width="1.2" height="151" fill="rgba(248,163,6,0.11)"/><rect x="926.9" y="495.3" width="1.2" height="151" fill="rgba(248,163,6,0.11)"/><rect x="1014.9" y="495.3" width="1.2" height="151" fill="rgba(248,163,6,0.14)"/><rect x="1048.0" y="495.3" width="1.2" height="151" fill="rgba(248,163,6,0.11)"/><rect x="1091.0" y="495.3" width="1.2" height="151" fill="rgba(248,163,6,0.11)"/><rect x="1129.2" y="495.3" width="1.2" height="151" fill="rgba(248,163,6,0.11)"/><rect x="1198.6" y="495.3" width="1.2" height="151" fill="rgba(248,163,6,0.11)"/><rect x="1204.9" y="495.3" width="1.2" height="151" fill="rgba(248,163,6,0.11)"/><rect x="1225.4" y="495.3" width="1.2" height="151" fill="rgba(248,163,6,0.28)"/><rect x="1228.1" y="495.3" width="1.2" height="151" fill="rgba(248,163,6,0.25)"/><rect x="1235.2" y="495.3" width="1.2" height="151" fill="rgba(248,163,6,0.11)"/><rect x="1271.1" y="495.3" width="1.2" height="151" fill="rgba(248,163,6,0.11)"/><rect x="1289.3" y="495.3" width="1.2" height="151" fill="rgba(248,163,6,0.08)"/><rect x="1399.7" y="495.3" width="1.2" height="151" fill="rgba(248,163,6,0.08)"/><rect x="1455.0" y="495.3" width="1.2" height="151" fill="rgba(248,163,6,0.08)"/><rect x="1458.7" y="495.3" width="1.2" height="151" fill="rgba(248,163,6,0.08)"/><rect x="1542.4" y="495.3" width="1.2" height="151" fill="rgba(248,163,6,0.08)"/><rect x="1599.7" y="495.3" width="1.2" height="151" fill="rgba(248,163,6,0.08)"/><rect x="1776.4" y="495.3" width="1.2" height="151" fill="rgba(248,163,6,0.14)"/><rect x="1821.1" y="495.3" width="1.2" height="151" fill="rgba(248,163,6,0.25)"/><rect x="1831.9" y="495.3" width="1.2" height="151" fill="rgba(248,163,6,0.11)"/><rect x="1883.7" y="495.3" width="1.2" height="151" fill="rgba(248,163,6,0.11)"/><rect x="1892.4" y="495.3" width="1.2" height="151" fill="rgba(248,163,6,0.19)"/><rect x="1895.4" y="495.3" width="1.2" height="151" fill="rgba(248,163,6,0.19)"/><rect x="1906.1" y="495.3" width="1.2" height="151" fill="rgba(248,163,6,0.11)"/><rect x="1907.6" y="495.3" width="1.2" height="151" fill="rgba(248,163,6,0.11)"/><rect x="1918.8" y="495.3" width="1.2" height="151" fill="rgba(248,163,6,0.11)"/><rect x="2012.8" y="495.3" width="1.2" height="151" fill="rgba(248,163,6,0.08)"/><rect x="2038.4" y="495.3" width="1.2" height="151" fill="rgba(248,163,6,0.08)"/><rect x="2153.9" y="495.3" width="1.2" height="151" fill="rgba(248,163,6,0.08)"/><rect x="2176.0" y="495.3" width="1.2" height="151" fill="rgba(248,163,6,0.08)"/><rect x="2220.9" y="495.3" width="1.2" height="151" fill="rgba(248,163,6,0.08)"/><rect x="2234.3" y="495.3" width="1.2" height="151" fill="rgba(248,163,6,0.08)"/><rect x="2237.6" y="495.3" width="1.2" height="151" fill="rgba(248,163,6,0.08)"/><rect x="2274.4" y="495.3" width="1.2" height="151" fill="rgba(248,163,6,0.08)"/><rect x="2287.4" y="495.3" width="1.2" height="151" fill="rgba(248,163,6,0.08)"/><rect x="2293.7" y="495.3" width="1.2" height="151" fill="rgba(248,163,6,0.08)"/><rect x="2398.3" y="495.3" width="1.2" height="151" fill="rgba(248,163,6,0.08)"/><rect x="1069.8" y="495.3" width="2.2" height="151" fill="rgba(220,53,69,0.62)"/><rect x="1168.1" y="495.3" width="2.2" height="151" fill="rgba(220,53,69,0.62)"/><rect x="1354.3" y="495.3" width="2.2" height="151" fill="rgba(220,53,69,0.62)"/><rect x="2380.1" y="495.3" width="2.2" height="151" fill="rgba(220,53,69,0.55)"/><rect x="868.5" y="495.3" width="8.5" height="151" fill="rgba(248,163,6,0.12)"/><rect x="1787" y="495.3" width="1.3" height="151" fill="rgba(225,120,70,0.7)"/><rect x="1013.2" y="495.3" width="1.8" height="151" fill="rgba(240,120,60,0.5)"/><path d="M126 644.2V640.3M127 644.2V639.9M128 644.0V637.8M129 644.8V639.4M130 643.6V638.7M131 643.9V639.9M132 644.6V642.2M133 644.4V639.8M134 644.8V516.5M135 643.9V635.3M136 644.1V501.7M137 644.6V638.0M138 644.1V637.2M139 643.9V642.7M140 644.5V641.6M141 643.7V641.4M142 644.1V638.8M143 644.4V642.7M144 643.9V641.7M145 644.1V643.5M146 644.8V636.2M147 644.0V641.1M148 644.3V640.6M149 644.1V641.7M150 644.6V636.6M151 644.6V641.0M152 644.7V640.9M153 643.7V636.3M154 644.6V642.2M155 644.5V639.6M156 644.6V641.5M157 643.8V589.5M158 644.0V640.2M159 644.7V639.7M160 643.6V615.3M161 644.8V640.2M162 644.7V642.3M163 644.7V637.0M164 644.6V641.3M165 644.3V641.1M166 644.3V639.4M167 644.7V642.7M168 644.3V638.8M169 644.5V641.0M170 644.2V640.1M171 643.6V633.7M172 643.8V641.6M173 644.7V635.1M174 644.1V641.4M175 644.0V637.8M176 644.6V641.8M177 643.9V640.8M178 644.2V641.3M179 644.1V642.7M180 644.5V638.3M181 643.9V640.1M182 644.4V609.7M183 643.8V639.3M184 643.8V642.3M185 644.2V641.0M186 644.6V638.4M187 644.7V641.7M188 644.6V632.8M189 643.8V636.9M190 644.5V635.0M191 644.7V639.4M192 644.1V619.3M193 643.6V639.3M194 644.5V638.8M195 644.5V641.2M196 644.2V635.6M197 644.5V641.6M198 644.3V639.1M199 644.7V640.9M200 643.8V636.2M201 643.6V639.8M202 644.6V636.3M203 643.7V639.6M204 644.7V639.8M205 644.1V641.2M206 644.3V640.1M207 644.0V641.1M208 644.5V641.1M209 643.8V641.9M210 644.1V639.8M211 644.4V639.9M212 644.3V639.0M213 644.6V638.4M214 644.7V637.9M215 643.7V642.3M216 643.8V638.0M217 644.4V609.0M218 644.2V642.0M219 643.7V639.3M220 644.3V642.5M221 644.6V641.2M222 644.0V629.6M223 644.3V640.2M224 644.5V638.6M225 644.2V640.3M226 644.4V636.0M227 644.8V616.0M228 644.5V638.6M229 644.7V633.4M230 644.5V634.8M231 644.0V640.9M232 644.4V640.1M233 644.4V639.5M234 644.2V618.5M235 644.8V638.4M236 643.7V638.9M237 643.9V641.3M238 644.8V636.6M239 644.3V619.3M240 644.3V640.1M241 644.0V640.5M242 643.9V618.5M243 643.7V633.9M244 643.7V632.0M245 643.9V640.4M246 644.2V638.8M247 644.1V639.6M248 644.4V639.9M249 644.1V640.2M250 644.7V639.9M251 644.7V640.7M252 643.9V639.4M253 644.4V640.4M254 644.8V640.7M255 643.7V642.3M256 644.4V641.4M257 644.2V641.2M258 644.6V642.4M259 643.9V639.2M260 644.0V641.7M261 644.7V642.3M262 644.7V641.8M263 644.0V641.2M264 644.4V640.8M265 644.4V642.7M266 644.5V642.0M267 644.3V641.8M268 644.0V639.5M269 644.7V642.2M270 644.0V642.3M271 644.3V641.9M272 644.3V639.8M273 643.9V643.8M274 644.3V643.3M275 643.7V641.0M276 644.5V643.5M277 644.5V641.0M278 644.0V641.3M279 644.4V641.5M280 644.4V639.6M281 644.1V641.3M282 644.8V641.7M283 644.1V641.8M284 644.4V642.8M285 644.2V640.7M286 643.8V634.8M287 644.3V642.3M288 643.8V642.2M289 644.6V640.6M290 644.7V641.6M291 644.2V642.2M292 643.9V642.0M293 644.5V641.6M294 644.0V641.2M295 643.9V641.4M296 643.6V641.4M297 644.2V643.0M298 644.6V642.9M299 644.7V643.2M300 643.8V642.8M301 643.7V640.2M302 644.0V642.3M303 644.2V641.0M304 644.3V642.4M305 644.6V641.6M306 644.1V643.0M307 644.1V641.4M308 644.5V641.0M309 644.6V640.9M310 644.6V640.9M311 643.8V641.3M312 644.7V642.8M313 644.5V641.8M314 644.1V640.1M315 644.8V643.0M316 643.6V639.1M317 643.7V642.1M318 644.6V642.0M319 644.7V641.2M320 643.8V641.3M321 643.8V641.4M322 644.3V642.2M323 644.0V640.8M324 643.8V641.6M325 644.3V639.0M326 643.9V641.2M327 644.6V640.1M328 643.6V642.9M329 644.1V642.7M330 644.2V636.4M331 643.8V642.7M332 644.0V641.4M333 643.8V641.1M334 644.4V641.6M335 644.8V638.4M336 644.7V641.9M337 644.7V641.4M338 644.7V641.9M339 644.0V640.0M340 644.1V641.3M341 644.2V635.6M342 643.9V642.3M343 643.9V639.8M344 643.7V640.0M345 644.7V640.7M346 644.7V642.1M347 644.3V640.1M348 644.7V640.0M349 644.0V638.9M350 644.7V642.1M351 643.7V641.1M352 644.4V637.4M353 643.9V639.3M354 643.8V642.8M355 644.0V643.0M356 643.9V636.9M357 643.7V640.9M358 644.2V639.0M359 643.7V642.1M360 643.9V643.2M361 644.8V641.4M362 644.1V643.1M363 644.3V639.1M364 644.5V640.9M365 644.4V641.4M366 644.5V640.4M367 644.1V643.1M368 643.9V637.4M369 644.2V641.5M370 643.8V640.2M371 643.9V641.5M372 644.5V638.7M373 643.7V642.2M374 643.9V642.5M375 643.8V641.3M376 644.6V642.1M377 644.8V641.8M378 644.8V643.2M379 643.6V642.8M380 644.1V642.7M381 644.3V640.7M382 644.0V642.5M383 644.4V641.2M384 644.6V642.8M385 644.1V639.3M386 643.9V640.0M387 643.8V641.9M388 644.0V642.3M389 644.1V637.3M390 643.9V639.2M391 643.9V643.9M392 644.0V641.9M393 643.6V638.7M394 644.7V642.1M395 643.7V643.0M396 644.3V639.2M397 644.3V642.8M398 644.5V643.7M399 643.9V641.0M400 644.6V640.6M401 643.9V642.3M402 644.8V640.8M403 643.9V642.7M404 644.6V640.0M405 644.1V642.9M406 644.0V641.8M407 644.1V641.5M408 643.9V641.6M409 643.8V642.7M410 644.4V640.8M411 643.7V643.0M412 644.3V641.7M413 643.6V641.6M414 643.9V643.9M415 644.3V641.0M416 644.7V639.5M417 644.1V639.5M418 644.7V641.8M419 644.2V642.3M420 643.8V642.1M421 643.9V642.3M422 644.4V641.8M423 644.6V641.2M424 644.7V639.6M425 644.4V642.8M426 644.3V643.2M427 644.2V641.9M428 643.8V632.8M429 643.7V641.5M430 644.2V642.2M431 644.1V641.7M432 644.0V639.6M433 644.6V642.1M434 644.3V640.2M435 643.9V642.0M436 643.8V634.7M437 644.1V639.5M438 643.7V642.3M439 644.2V641.0M440 644.6V641.0M441 644.5V641.4M442 644.3V637.8M443 643.7V639.4M444 643.7V638.6M445 643.9V640.3M446 643.9V641.8M447 643.8V638.7M448 644.1V640.6M449 644.3V642.7M450 643.8V641.4M451 644.2V641.9M452 644.5V640.1M453 644.5V641.8M454 643.9V638.0M455 644.0V640.2M456 644.4V534.0M457 644.0V641.0M458 643.9V642.0M459 643.8V638.8M460 644.1V636.1M461 643.8V641.5M462 643.7V638.7M463 643.9V637.6M464 643.9V641.3M465 644.8V641.1M466 644.4V642.6M467 644.6V642.3M468 643.7V639.7M469 644.4V636.5M470 644.3V640.9M471 644.1V632.9M472 643.8V639.8M473 644.8V639.4M474 644.8V642.2M475 644.4V640.5M476 643.7V631.0M477 644.6V635.6M478 643.8V640.8M479 644.3V642.0M480 644.6V638.7M481 643.8V638.8M482 644.6V636.5M483 644.1V639.3M484 643.7V637.3M485 643.8V636.7M486 644.0V634.2M487 644.4V640.0M488 644.2V641.4M489 643.8V636.3M490 644.1V639.4M491 644.6V642.6M492 644.7V640.9M493 644.3V636.0M494 644.1V643.4M495 644.3V638.1M496 643.9V640.7M497 644.4V643.2M498 643.8V639.8M499 644.0V638.8M500 644.7V636.6M501 644.5V639.9M502 644.7V636.3M503 644.0V631.0M504 644.8V635.5M505 644.4V633.3M506 644.4V640.3M507 644.1V639.2M508 644.4V636.3M509 644.6V635.2M510 644.2V631.9M511 644.2V640.1M512 644.3V639.0M513 643.9V637.4M514 644.1V637.9M515 643.7V637.0M516 644.2V635.6M517 644.8V638.5M518 644.6V637.9M519 644.2V633.3M520 643.7V618.5M521 644.0V638.6M522 644.7V637.6M523 644.1V636.9M524 644.0V640.2M525 644.1V638.1M526 643.7V637.7M527 643.9V632.8M528 644.2V639.8M529 643.6V641.1M530 644.0V633.8M531 644.0V639.4M532 643.7V637.5M533 644.6V639.5M534 643.9V619.0M535 644.6V636.6M536 644.5V638.5M537 643.7V636.8M538 644.4V636.2M539 644.1V619.5M540 644.1V635.1M541 644.0V637.9M542 644.6V636.4M543 643.7V635.8M544 644.1V633.5M545 644.6V636.5M546 644.1V637.6M547 644.5V637.6M548 644.0V609.0M549 644.2V639.4M550 644.0V638.5M551 644.0V636.8M552 644.5V593.0M553 644.6V637.1M554 644.3V639.1M555 643.9V633.7M556 644.6V619.0M557 643.8V636.8M558 643.9V635.9M559 643.7V639.8M560 644.7V609.7M561 644.5V636.1M562 643.9V642.0M563 643.9V637.3M564 643.9V640.1M565 643.8V639.2M566 644.2V609.7M567 644.0V619.7M568 644.0V635.8M569 643.9V637.4M570 644.8V640.6M571 644.4V642.0M572 644.2V630.0M573 644.2V640.6M574 644.4V638.6M575 644.2V638.2M576 643.8V622.2M577 644.7V638.7M578 644.3V622.5M579 644.2V626.4M580 644.5V635.7M581 643.6V638.1M582 644.2V633.6M583 643.9V639.4M584 643.9V635.3M585 643.9V637.9M586 643.9V636.6M587 644.0V635.3M588 644.5V639.8M589 643.9V637.3M590 644.0V639.3M591 644.1V642.2M592 644.1V635.5M593 644.2V639.5M594 644.7V637.5M595 644.8V639.2M596 643.8V634.2M597 644.7V638.9M598 643.9V637.8M599 643.8V634.0M600 644.3V643.4M601 643.7V640.7M602 644.5V642.6M603 644.0V639.8M604 644.8V641.8M605 644.2V642.2M606 643.8V637.8M607 644.6V638.0M608 643.8V642.0M609 644.3V641.0M610 644.0V642.5M611 644.1V643.9M612 644.7V641.8M613 643.9V643.2M614 644.3V643.9M615 644.0V642.5M616 644.2V641.7M617 644.4V642.0M618 644.2V642.1M619 644.6V642.7M620 644.2V641.1M621 644.2V642.3M622 644.2V642.1M623 644.6V642.4M624 644.6V639.2M625 643.6V642.5M626 644.3V642.0M627 643.7V641.7M628 644.5V642.5M629 644.3V638.5M630 643.6V642.0M631 644.4V643.3M632 643.8V642.0M633 644.0V640.9M634 644.2V641.1M635 644.2V642.0M636 643.8V642.2M637 643.7V641.8M638 644.7V643.2M639 643.9V641.5M640 644.1V643.1M641 644.4V640.0M642 644.2V643.0M643 644.3V642.7M644 644.0V643.4M645 644.1V640.1M646 644.7V642.2M647 644.1V643.1M648 644.5V643.2M649 644.3V642.5M650 644.1V642.1M651 644.6V642.1M652 644.8V642.1M653 644.6V643.0M654 644.7V642.0M655 644.1V643.8M656 644.0V642.5M657 644.5V641.5M658 644.1V642.2M659 644.5V643.9M660 644.0V642.6M661 644.4V640.9M662 644.8V643.9M663 644.5V640.0M664 644.1V643.1M665 644.1V640.9M666 644.5V641.3M667 644.3V641.8M668 643.9V643.1M669 643.8V641.7M670 643.9V638.7M671 644.3V640.8M672 644.3V642.2M673 643.7V640.3M674 644.6V643.2M675 644.2V638.4M676 643.8V643.3M677 643.9V644.2M678 644.6V642.7M679 644.4V641.3M680 644.4V637.2M681 644.2V642.5M682 644.3V640.1M683 643.8V640.1M684 644.1V636.1M685 644.4V638.2M686 643.9V637.1M687 643.7V638.1M688 643.7V635.8M689 644.3V641.1M690 644.4V638.1M691 643.9V637.9M692 643.9V638.7M693 644.3V635.0M694 644.2V639.9M695 644.5V638.9M696 644.2V637.6M697 644.2V639.5M698 644.7V638.8M699 644.3V609.7M700 644.6V639.9M701 644.1V636.6M702 644.8V639.8M703 644.3V640.7M704 644.2V638.9M705 643.7V640.8M706 644.5V634.3M707 644.2V638.2M708 644.1V606.5M709 644.4V638.8M710 644.5V638.3M711 643.9V638.8M712 643.7V625.7M713 644.2V636.9M714 644.6V636.2M715 644.7V641.5M716 644.6V641.9M717 644.2V641.5M718 643.9V638.3M719 644.8V642.5M720 644.5V637.2M721 644.1V639.0M722 644.0V627.2M723 644.7V639.7M724 644.5V640.9M725 644.5V638.7M726 644.5V639.7M727 643.8V618.9M728 644.3V629.7M729 643.7V640.7M730 643.8V641.4M731 644.3V638.8M732 643.6V639.0M733 643.6V638.5M734 644.3V634.8M735 644.4V640.3M736 644.5V640.0M737 644.5V640.6M738 644.7V640.1M739 644.6V636.1M740 643.8V640.8M741 644.3V638.3M742 644.8V628.0M743 643.8V640.2M744 644.0V637.3M745 643.9V638.5M746 644.7V639.2M747 644.0V639.4M748 643.8V637.2M749 643.6V641.3M750 644.3V639.4M751 644.4V641.5M752 643.7V637.7M753 643.6V638.5M754 644.6V617.7M755 644.5V639.6M756 644.6V635.3M757 644.2V641.7M758 644.3V641.6M759 644.3V634.8M760 644.2V637.4M761 644.2V637.0M762 644.8V639.7M763 644.4V641.2M764 644.3V640.3M765 644.0V637.1M766 644.2V623.5M767 644.5V640.3M768 643.7V640.6M769 644.5V636.3M770 644.5V637.9M771 644.7V638.3M772 644.7V641.4M773 644.6V641.0M774 644.3V641.6M775 643.8V640.7M776 644.1V616.0M777 643.7V636.0M778 644.2V640.5M779 643.8V638.2M780 644.3V642.3M781 644.8V636.1M782 644.1V639.9M783 644.0V627.0M784 644.4V633.8M785 644.6V640.2M786 643.7V636.5M787 643.7V641.8M788 644.7V641.8M789 643.9V639.9M790 643.6V639.4M791 643.8V636.1M792 644.3V626.1M793 644.0V639.6M794 644.6V635.9M795 643.7V638.7M796 644.1V638.8M797 644.5V635.8M798 644.4V638.0M799 644.2V641.2M800 644.5V636.2M801 643.7V637.6M802 644.3V640.1M803 644.6V641.8M804 643.7V603.4M805 644.4V641.8M806 644.2V639.6M807 643.8V641.2M808 643.6V580.2M809 644.8V639.5M810 644.7V642.4M811 643.9V640.1M812 643.9V639.1M813 644.1V636.9M814 644.1V639.3M815 644.3V636.4M816 644.1V636.3M817 644.0V641.1M818 644.1V641.5M819 643.9V632.1M820 643.8V634.1M821 644.0V641.3M822 644.6V639.3M823 644.3V583.4M824 644.6V640.7M825 644.6V638.2M826 644.0V639.0M827 644.6V642.6M828 644.0V640.7M829 644.3V634.3M830 643.6V639.8M831 644.1V638.0M832 644.0V639.8M833 644.0V639.1M834 644.5V635.8M835 644.5V638.6M836 644.7V627.0M837 644.2V636.1M838 644.6V638.4M839 643.7V637.9M840 643.8V639.1M841 644.2V638.7M842 643.6V637.7M843 644.5V641.9M844 644.5V604.0M845 644.0V638.9M846 643.7V639.3M847 644.1V639.9M848 644.7V630.5M849 644.2V637.3M850 644.8V637.6M851 644.6V640.6M852 644.5V640.8M853 644.8V636.8M854 644.2V639.4M855 644.0V640.5M856 643.9V638.4M857 644.5V635.9M858 644.8V637.2M859 644.4V639.6M860 644.7V625.7M861 643.8V616.5M862 643.7V630.2M863 643.9V634.7M864 644.7V632.5M865 644.3V619.1M866 644.4V630.7M867 644.6V623.7M868 644.4V589.1M869 643.6V619.2M870 644.3V619.9M871 644.1V617.0M872 644.8V634.1M873 643.7V630.2M874 644.3V631.5M875 644.8V631.9M876 643.6V633.6M877 643.9V632.1M878 643.9V628.7M879 644.3V609.7M880 644.5V609.9M881 644.3V634.5M882 644.1V628.9M883 644.3V631.4M884 644.8V621.0M885 644.3V637.5M886 643.7V595.6M887 643.6V607.7M888 643.7V625.8M889 644.5V621.6M890 643.9V617.0M891 643.8V617.0M892 643.7V628.2M893 644.0V626.3M894 643.6V631.6M895 644.7V629.1M896 643.7V636.0M897 644.6V626.7M898 644.8V615.0M899 644.7V628.6M900 644.0V614.7M901 644.1V633.6M902 644.2V616.0M903 643.9V634.5M904 644.6V625.1M905 644.4V627.9M906 643.9V631.6M907 644.1V628.5M908 643.8V622.9M909 643.7V621.2M910 644.3V627.6M911 643.8V620.0M912 643.6V630.8M913 644.2V616.2M914 644.2V613.8M915 644.5V632.8M916 644.4V633.3M917 644.3V619.4M918 644.1V616.0M919 644.1V615.2M920 644.3V629.5M921 643.7V629.9M922 644.3V629.7M923 643.9V620.6M924 644.4V620.7M925 644.3V615.0M926 644.1V631.0M927 643.6V623.8M928 643.9V601.6M929 643.9V614.0M930 643.9V627.7M931 644.0V607.0M932 644.4V617.1M933 643.9V613.0M934 644.6V631.7M935 644.3V638.1M936 643.9V643.0M937 643.9V640.0M938 644.6V643.6M939 644.3V642.3M940 643.9V641.7M941 644.7V643.5M942 644.1V643.3M943 643.8V643.4M944 643.8V643.1M945 644.2V641.8M946 644.4V642.2M947 644.8V644.0M948 643.9V642.0M949 644.5V642.9M950 644.3V640.3M951 644.5V638.8M952 644.5V641.4M953 644.4V641.9M954 644.4V642.4M955 644.0V642.5M956 644.2V644.1M957 643.8V642.8M958 643.7V642.9M959 644.6V642.4M960 644.3V642.2M961 643.7V643.3M962 643.8V641.9M963 644.3V643.3M964 644.6V643.5M965 644.3V641.7M966 644.1V642.9M967 643.9V642.0M968 644.3V641.1M969 644.7V642.4M970 643.6V642.0M971 643.6V643.5M972 644.8V643.5M973 644.7V640.1M974 644.2V642.1M975 644.6V642.5M976 643.9V643.4M977 643.9V643.5M978 644.8V641.6M979 643.7V642.7M980 644.3V640.1M981 644.1V643.2M982 644.3V644.1M983 644.6V642.7M984 643.7V641.7M985 644.3V643.7M986 644.1V643.1M987 643.7V641.4M988 644.0V642.0M989 644.2V640.3M990 644.1V644.3M991 644.4V643.5M992 643.7V643.1M993 644.7V642.5M994 644.4V642.6M995 643.6V643.3M996 643.7V634.0M997 643.9V644.2M998 644.2V642.4M999 644.2V643.5M1000 644.1V641.9M1001 644.8V640.9M1002 643.7V641.6M1003 644.3V642.1M1004 644.0V642.1M1005 644.1V643.0M1006 644.6V641.4M1007 644.0V642.7M1008 644.2V641.3M1009 643.8V643.2M1010 643.7V630.5M1011 643.8V637.8M1012 644.2V641.0M1013 643.8V639.7M1014 644.3V641.6M1015 644.5V640.0M1016 644.0V639.4M1017 644.4V640.7M1018 644.4V641.1M1019 644.2V638.6M1020 643.8V641.1M1021 644.5V636.9M1022 644.4V643.0M1023 644.7V643.0M1024 643.8V640.4M1025 644.0V641.4M1026 644.6V642.3M1027 644.8V642.1M1028 644.7V636.5M1029 643.7V638.8M1030 643.6V641.5M1031 644.2V636.8M1032 644.4V638.0M1033 644.7V642.5M1034 644.7V641.2M1035 644.4V641.5M1036 644.4V642.4M1037 644.0V636.9M1038 643.6V642.0M1039 643.7V640.7M1040 644.2V636.8M1041 644.2V642.9M1042 644.1V641.3M1043 644.2V640.0M1044 643.8V639.3M1045 643.7V640.3M1046 644.2V641.6M1047 643.9V643.0M1048 644.4V628.0M1049 644.1V642.5M1050 643.8V640.4M1051 643.7V641.0M1052 644.2V642.9M1053 644.1V637.6M1054 643.9V637.8M1055 644.2V640.4M1056 644.7V640.4M1057 644.1V640.4M1058 644.2V641.9M1059 644.7V637.9M1060 643.8V642.4M1061 643.6V641.7M1062 644.7V639.8M1063 644.4V641.3M1064 644.0V641.3M1065 644.5V639.2M1066 644.0V640.1M1067 644.6V634.9M1068 644.6V640.6M1069 644.5V637.1M1070 643.7V637.8M1071 644.5V638.0M1072 644.2V638.2M1073 644.4V638.2M1074 643.9V638.9M1075 644.3V631.0M1076 644.5V637.6M1077 643.9V643.0M1078 644.3V641.8M1079 644.5V641.5M1080 644.0V636.0M1081 643.7V633.8M1082 644.3V640.4M1083 643.8V640.9M1084 644.4V641.1M1085 644.5V642.3M1086 644.6V642.6M1087 644.6V640.0M1088 643.8V641.5M1089 644.1V641.8M1090 643.7V636.8M1091 644.1V632.8M1092 644.0V623.9M1093 643.7V636.1M1094 644.5V629.6M1095 644.3V636.9M1096 644.1V638.6M1097 644.3V634.2M1098 644.4V637.7M1099 643.7V638.3M1100 644.3V617.7M1101 643.7V632.0M1102 643.9V639.8M1103 643.7V626.5M1104 643.9V633.8M1105 643.9V636.3M1106 644.8V637.4M1107 644.4V638.6M1108 643.9V638.8M1109 644.3V634.8M1110 643.9V567.2M1111 643.7V629.3M1112 643.7V637.8M1113 644.7V637.4M1114 644.0V632.8M1115 644.5V630.2M1116 643.7V637.8M1117 644.6V635.6M1118 644.4V630.7M1119 644.3V632.8M1120 644.7V618.5M1121 644.0V638.0M1122 644.3V625.9M1123 643.7V638.3M1124 644.3V620.0M1125 644.6V637.0M1126 644.6V638.4M1127 644.7V638.5M1128 644.5V632.0M1129 643.7V632.5M1130 644.5V633.5M1131 644.5V638.2M1132 644.5V634.6M1133 643.9V638.0M1134 643.7V636.5M1135 644.2V631.3M1136 644.6V633.0M1137 644.2V631.0M1138 643.8V641.0M1139 644.3V639.3M1140 644.3V637.3M1141 644.0V637.0M1142 643.7V638.5M1143 644.3V627.9M1144 644.3V640.9M1145 644.3V640.2M1146 643.6V641.0M1147 644.5V631.0M1148 644.2V641.2M1149 644.3V640.0M1150 644.5V629.6M1151 644.1V638.6M1152 644.2V635.2M1153 644.5V637.6M1154 643.9V640.5M1155 643.6V638.8M1156 644.6V639.3M1157 643.8V627.9M1158 644.6V639.4M1159 643.6V640.4M1160 643.9V638.7M1161 643.7V638.8M1162 644.8V638.3M1163 644.8V634.0M1164 644.8V635.2M1165 644.3V636.2M1166 644.0V616.8M1167 644.2V635.3M1168 644.0V640.4M1169 643.6V638.7M1170 644.5V638.1M1171 644.3V638.9M1172 644.5V640.1M1173 644.7V641.1M1174 644.7V637.8M1175 644.5V634.6M1176 644.6V637.6M1177 643.9V641.2M1178 644.1V633.0M1179 644.4V636.5M1180 644.7V640.6M1181 644.2V639.8M1182 644.2V636.9M1183 644.2V601.0M1184 643.7V637.0M1185 644.2V635.8M1186 644.6V637.5M1187 644.0V639.0M1188 644.5V636.8M1189 644.3V640.0M1190 644.3V640.0M1191 644.6V638.1M1192 643.9V639.1M1193 644.3V632.5M1194 644.7V639.4M1195 643.7V636.3M1196 644.4V630.4M1197 643.7V618.7M1198 644.6V642.3M1199 644.0V639.7M1200 643.6V635.4M1201 644.3V638.7M1202 644.1V636.3M1203 644.4V639.2M1204 644.4V624.9M1205 643.6V636.7M1206 643.7V637.9M1207 643.7V639.1M1208 643.6V639.6M1209 644.7V641.2M1210 644.7V616.9M1211 644.1V631.3M1212 643.6V632.6M1213 644.2V639.5M1214 643.6V641.0M1215 643.6V624.2M1216 644.4V632.8M1217 643.7V623.3M1218 644.5V633.4M1219 644.2V630.1M1220 643.8V618.8M1221 644.5V627.9M1222 644.3V633.7M1223 644.1V627.3M1224 644.0V601.0M1225 643.7V633.9M1226 643.6V593.0M1227 643.6V633.9M1228 644.6V635.7M1229 644.0V605.7M1230 644.2V624.0M1231 644.4V632.0M1232 644.4V632.4M1233 644.7V633.4M1234 644.4V636.5M1235 644.7V634.3M1236 644.4V618.5M1237 644.4V635.6M1238 643.9V627.3M1239 644.8V622.7M1240 643.7V631.0M1241 644.8V632.3M1242 644.4V630.7M1243 644.1V630.8M1244 643.9V608.7M1245 644.8V629.8M1246 643.7V625.6M1247 644.3V628.7M1248 644.0V578.7M1249 644.7V629.4M1250 644.3V631.7M1251 644.7V633.0M1252 643.8V619.3M1253 644.8V633.3M1254 644.1V625.3M1255 644.1V628.8M1256 644.7V627.8M1257 644.5V624.4M1258 643.9V629.6M1259 643.9V629.6M1260 644.4V634.3M1261 644.1V625.7M1262 644.7V621.7M1263 644.3V626.5M1264 644.2V617.7M1265 644.5V630.4M1266 644.2V624.4M1267 644.1V629.8M1268 643.9V629.2M1269 643.8V631.1M1270 644.0V641.0M1271 644.7V635.2M1272 644.7V641.6M1273 644.8V636.1M1274 644.0V639.5M1275 644.2V638.8M1276 644.3V639.1M1277 643.9V637.9M1278 643.9V640.1M1279 644.3V636.9M1280 644.3V641.0M1281 643.7V630.7M1282 644.7V639.4M1283 644.1V639.1M1284 644.6V633.2M1285 644.2V641.6M1286 644.0V642.0M1287 644.1V642.5M1288 643.8V640.8M1289 644.2V643.1M1290 643.6V643.1M1291 644.3V642.2M1292 644.5V643.3M1293 643.9V644.2M1294 644.0V642.2M1295 644.3V639.9M1296 643.6V643.5M1297 644.5V642.9M1298 644.7V642.2M1299 644.2V640.6M1300 644.3V642.9M1301 644.5V641.6M1302 644.8V642.5M1303 644.1V642.2M1304 644.2V642.2M1305 644.3V641.6M1306 644.3V642.4M1307 643.9V642.4M1308 644.0V642.6M1309 644.0V642.9M1310 643.7V641.9M1311 644.0V642.0M1312 644.4V642.5M1313 644.3V641.5M1314 644.7V640.9M1315 644.3V642.8M1316 644.2V642.2M1317 643.6V642.1M1318 644.8V639.4M1319 644.7V641.9M1320 644.5V641.8M1321 643.8V642.2M1322 643.6V636.0M1323 644.5V641.2M1324 644.5V642.4M1325 644.1V643.5M1326 644.5V643.9M1327 643.8V643.7M1328 644.7V642.3M1329 644.7V643.2M1330 644.2V644.1M1331 644.3V643.1M1332 644.3V640.3M1333 644.5V643.4M1334 643.6V643.1M1335 643.7V642.7M1336 644.3V641.4M1337 644.4V642.8M1338 644.2V644.0M1339 643.9V643.1M1340 644.6V643.7M1341 644.4V642.4M1342 644.5V640.8M1343 644.4V641.2M1344 643.7V642.5M1345 644.2V642.3M1346 644.4V641.3M1347 644.1V642.3M1348 644.7V640.9M1349 643.6V643.2M1350 644.3V642.4M1351 644.3V643.0M1352 644.0V642.6M1353 643.8V641.6M1354 644.7V642.7M1355 644.7V639.8M1356 643.6V644.2M1357 643.8V642.1M1358 644.0V638.7M1359 643.8V639.5M1360 643.8V643.3M1361 644.0V642.4M1362 644.1V643.5M1363 644.5V643.8M1364 644.7V642.5M1365 644.7V639.5M1366 644.7V643.5M1367 644.3V643.1M1368 644.1V644.0M1369 644.0V642.4M1370 644.1V643.5M1371 644.1V640.1M1372 644.5V643.0M1373 644.0V642.4M1374 644.4V643.7M1375 644.0V643.9M1376 644.7V643.6M1377 643.8V640.6M1378 644.6V643.3M1379 643.8V643.0M1380 644.7V640.0M1381 644.2V639.7M1382 644.7V640.0M1383 643.8V636.2M1384 643.8V640.2M1385 644.3V642.6M1386 644.4V637.7M1387 643.8V641.2M1388 643.8V640.3M1389 643.7V636.0M1390 643.8V628.0M1391 644.0V637.5M1392 643.8V641.3M1393 644.4V618.5M1394 644.6V641.0M1395 644.4V639.9M1396 644.3V639.7M1397 644.6V631.8M1398 644.6V638.4M1399 643.9V630.4M1400 643.9V640.0M1401 644.3V639.1M1402 644.1V640.0M1403 644.2V639.2M1404 644.4V639.1M1405 644.6V639.0M1406 643.9V640.3M1407 643.9V639.8M1408 643.9V641.5M1409 643.8V640.1M1410 644.4V640.2M1411 644.4V631.7M1412 643.9V642.1M1413 644.8V633.6M1414 644.7V639.5M1415 644.1V638.5M1416 644.0V639.0M1417 643.7V634.3M1418 644.1V640.8M1419 643.8V640.8M1420 643.9V641.6M1421 644.8V640.8M1422 644.5V639.8M1423 644.2V641.8M1424 644.8V634.4M1425 643.6V642.7M1426 644.6V637.9M1427 643.8V632.0M1428 644.6V638.6M1429 643.7V627.0M1430 643.6V636.7M1431 643.9V630.4M1432 644.2V639.2M1433 644.6V642.1M1434 643.7V637.4M1435 644.6V642.0M1436 644.4V641.2M1437 644.4V641.3M1438 644.7V641.1M1439 644.4V641.2M1440 644.4V638.3M1441 644.7V636.4M1442 644.5V632.8M1443 644.1V642.3M1444 644.1V639.5M1445 644.0V640.4M1446 644.6V639.0M1447 643.8V640.5M1448 644.6V639.7M1449 644.2V638.7M1450 643.8V640.1M1451 643.9V641.3M1452 643.8V637.3M1453 644.4V641.1M1454 644.0V639.2M1455 643.7V633.6M1456 643.9V642.0M1457 643.7V638.6M1458 643.9V640.2M1459 644.2V640.8M1460 644.2V642.0M1461 644.7V634.4M1462 643.7V640.2M1463 644.5V640.4M1464 644.4V638.2M1465 644.2V639.8M1466 644.7V640.8M1467 644.0V637.9M1468 644.2V638.3M1469 644.6V619.3M1470 643.9V638.7M1471 644.7V639.0M1472 644.0V640.0M1473 643.6V637.4M1474 644.4V635.5M1475 644.6V640.5M1476 643.8V639.8M1477 644.7V641.0M1478 644.7V640.8M1479 643.7V641.0M1480 643.9V642.2M1481 644.4V637.9M1482 643.8V641.4M1483 644.2V643.1M1484 643.7V639.4M1485 644.8V640.2M1486 644.4V641.2M1487 644.7V640.9M1488 644.4V637.6M1489 644.8V639.3M1490 643.9V639.4M1491 644.1V628.8M1492 644.7V641.4M1493 644.3V639.9M1494 644.7V641.5M1495 644.4V636.7M1496 644.7V636.1M1497 644.5V638.1M1498 644.2V639.3M1499 644.7V636.0M1500 644.3V639.4M1501 644.1V642.0M1502 644.6V639.8M1503 643.7V635.2M1504 644.5V640.0M1505 644.2V641.3M1506 643.7V640.8M1507 644.8V641.3M1508 644.3V641.0M1509 644.7V639.3M1510 644.0V639.4M1511 644.7V638.4M1512 643.8V640.6M1513 644.7V639.4M1514 644.4V639.3M1515 644.0V633.9M1516 644.8V635.9M1517 644.8V639.9M1518 643.6V617.7M1519 644.1V641.7M1520 644.4V641.6M1521 644.0V636.6M1522 644.6V633.6M1523 643.9V642.1M1524 643.9V639.8M1525 644.1V640.5M1526 644.7V639.1M1527 643.7V639.4M1528 644.2V626.0M1529 644.7V637.2M1530 644.7V640.3M1531 644.3V640.4M1532 644.8V641.1M1533 644.4V639.2M1534 644.3V637.5M1535 644.8V617.7M1536 644.6V638.6M1537 644.6V641.3M1538 644.8V618.5M1539 643.8V639.4M1540 644.5V638.7M1541 644.1V639.2M1542 644.4V633.7M1543 644.0V638.9M1544 644.5V639.7M1545 644.8V632.8M1546 644.6V642.1M1547 644.8V642.0M1548 644.4V634.2M1549 644.1V639.7M1550 644.8V635.9M1551 644.5V626.5M1552 644.8V604.8M1553 644.1V635.4M1554 644.0V629.8M1555 644.2V633.1M1556 643.7V637.1M1557 644.2V631.3M1558 644.7V595.4M1559 644.6V631.0M1560 644.0V630.0M1561 644.0V617.7M1562 644.6V636.5M1563 643.6V637.5M1564 644.5V627.5M1565 643.8V635.4M1566 643.7V634.5M1567 643.9V620.0M1568 643.8V633.9M1569 644.7V615.3M1570 644.7V574.3M1571 643.8V630.7M1572 643.9V633.2M1573 644.5V625.3M1574 643.9V602.6M1575 644.5V636.0M1576 644.7V605.7M1577 644.3V627.6M1578 643.9V629.8M1579 643.8V630.0M1580 644.3V622.5M1581 644.5V629.4M1582 643.9V632.2M1583 644.3V625.9M1584 644.4V638.2M1585 644.2V626.4M1586 644.8V638.9M1587 644.0V634.7M1588 643.7V632.2M1589 644.3V623.2M1590 643.7V630.5M1591 644.7V609.2M1592 644.0V633.4M1593 644.3V620.0M1594 644.7V627.9M1595 643.9V630.5M1596 643.9V625.3M1597 643.9V631.7M1598 643.7V626.7M1599 643.7V629.9M1600 643.9V634.3M1601 644.3V621.1M1602 644.2V638.9M1603 644.4V630.7M1604 644.2V629.2M1605 644.7V633.3M1606 644.2V638.2M1607 643.8V628.1M1608 644.3V626.1M1609 644.1V626.6M1610 644.4V631.0M1611 644.1V637.5M1612 643.7V635.1M1613 644.6V637.6M1614 644.1V633.7M1615 643.7V633.1M1616 643.9V631.7M1617 643.9V634.5M1618 644.2V635.7M1619 644.1V624.5M1620 644.0V617.5M1621 644.7V633.3M1622 643.7V627.1M1623 643.9V630.8M1624 644.5V630.3M1625 644.0V632.9M1626 644.5V626.5M1627 644.4V635.9M1628 643.7V627.7M1629 643.6V638.0M1630 643.9V641.0M1631 644.1V635.4M1632 644.8V641.8M1633 644.3V638.5M1634 643.8V640.6M1635 644.7V641.5M1636 644.8V641.1M1637 644.2V636.9M1638 643.8V639.3M1639 643.9V635.3M1640 643.9V640.9M1641 644.3V640.9M1642 644.8V627.3M1643 643.9V639.8M1644 644.3V640.8M1645 644.5V639.7M1646 643.7V625.1M1647 644.3V637.7M1648 643.8V642.5M1649 644.5V640.7M1650 643.8V643.0M1651 644.8V642.4M1652 644.6V642.1M1653 643.9V643.8M1654 644.8V636.2M1655 644.1V642.0M1656 644.1V641.6M1657 644.4V641.3M1658 644.0V639.2M1659 644.3V641.7M1660 643.8V641.3M1661 643.8V642.0M1662 643.7V642.4M1663 644.7V643.5M1664 644.0V642.9M1665 644.5V642.4M1666 643.9V641.6M1667 644.6V643.3M1668 644.7V640.5M1669 644.0V642.5M1670 644.1V642.0M1671 644.7V642.7M1672 644.0V642.5M1673 644.3V643.3M1674 643.8V643.1M1675 644.7V640.8M1676 644.0V644.1M1677 644.7V639.7M1678 644.5V642.5M1679 643.9V639.9M1680 643.8V640.2M1681 644.4V641.9M1682 644.3V643.1M1683 643.6V641.8M1684 643.8V641.1M1685 643.6V643.4M1686 643.8V639.5M1687 643.8V643.1M1688 643.8V642.1M1689 644.0V642.6M1690 643.7V642.8M1691 643.7V642.4M1692 644.8V642.1M1693 643.8V641.5M1694 644.1V638.9M1695 644.2V642.3M1696 644.3V641.2M1697 644.7V642.7M1698 644.3V643.3M1699 643.9V643.9M1700 643.7V642.4M1701 644.1V639.2M1702 644.3V641.8M1703 644.3V639.2M1704 644.7V638.4M1705 644.1V642.1M1706 643.9V642.7M1707 644.3V642.6M1708 644.7V642.8M1709 644.4V639.5M1710 643.8V641.1M1711 643.6V643.2M1712 643.6V641.3M1713 644.6V642.4M1714 644.3V643.2M1715 643.7V642.1M1716 644.7V643.2M1717 644.1V641.0M1718 644.4V642.7M1719 643.8V642.4M1720 643.8V641.3M1721 644.6V641.3M1722 644.2V637.0M1723 643.9V642.8M1724 644.3V642.5M1725 644.7V642.6M1726 644.1V642.8M1727 644.5V643.3M1728 644.3V638.5M1729 644.1V639.5M1730 643.9V642.1M1731 644.1V643.7M1732 644.4V642.9M1733 644.7V642.4M1734 643.6V637.7M1735 644.5V641.6M1736 643.8V641.1M1737 644.3V639.0M1738 644.7V641.0M1739 643.8V640.7M1740 643.8V639.8M1741 643.9V642.2M1742 644.5V642.8M1743 644.4V638.7M1744 643.7V637.6M1745 644.0V638.1M1746 644.7V641.7M1747 644.1V642.0M1748 643.8V641.2M1749 643.8V640.6M1750 644.0V642.1M1751 644.7V643.4M1752 644.4V642.6M1753 644.5V641.9M1754 644.1V640.4M1755 644.6V640.6M1756 644.5V642.7M1757 644.3V636.8M1758 644.8V638.8M1759 644.3V642.2M1760 643.8V636.8M1761 643.8V633.3M1762 644.2V639.4M1763 643.9V637.0M1764 644.0V639.2M1765 643.7V638.3M1766 644.7V618.5M1767 643.7V638.3M1768 644.4V632.8M1769 643.8V629.0M1770 644.6V636.9M1771 644.5V640.9M1772 644.1V640.1M1773 644.2V637.9M1774 644.4V640.0M1775 644.7V631.2M1776 644.5V634.8M1777 643.8V639.5M1778 644.3V637.3M1779 643.9V573.0M1780 644.3V636.5M1781 644.6V635.1M1782 644.0V578.6M1783 644.4V641.0M1784 644.0V634.7M1785 644.1V633.0M1786 644.0V638.2M1787 644.5V639.2M1788 644.0V572.3M1789 644.5V636.2M1790 644.3V638.2M1791 644.3V637.3M1792 644.4V639.4M1793 643.6V620.9M1794 644.5V633.0M1795 644.7V634.2M1796 644.1V634.5M1797 643.9V636.6M1798 644.2V613.7M1799 643.9V602.6M1800 644.2V641.4M1801 644.2V638.2M1802 644.0V635.6M1803 643.7V641.1M1804 644.4V643.0M1805 644.6V640.4M1806 643.7V638.4M1807 643.7V637.6M1808 644.4V640.1M1809 644.6V639.8M1810 644.1V637.6M1811 643.7V640.2M1812 643.9V633.2M1813 644.6V640.9M1814 644.4V640.7M1815 643.9V640.5M1816 644.6V636.8M1817 644.0V636.1M1818 644.7V641.6M1819 644.0V641.3M1820 644.0V638.6M1821 643.9V643.3M1822 644.6V638.7M1823 644.7V642.6M1824 644.3V628.2M1825 644.5V640.5M1826 643.9V639.9M1827 644.6V625.7M1828 644.6V640.5M1829 643.8V641.0M1830 643.7V638.5M1831 643.9V641.0M1832 644.2V642.0M1833 644.5V639.5M1834 644.6V640.8M1835 644.1V639.2M1836 643.9V640.4M1837 644.1V640.0M1838 644.1V638.8M1839 644.5V639.9M1840 644.5V641.0M1841 644.6V637.4M1842 644.1V638.8M1843 644.0V637.6M1844 644.3V632.6M1845 643.9V639.6M1846 644.7V639.9M1847 644.2V634.1M1848 644.0V632.9M1849 644.3V638.7M1850 643.7V639.3M1851 644.5V639.0M1852 644.7V630.4M1853 643.7V632.3M1854 643.8V638.2M1855 643.6V637.1M1856 644.5V632.8M1857 643.8V640.5M1858 644.3V640.8M1859 643.9V642.5M1860 644.4V639.7M1861 644.5V637.8M1862 643.7V634.3M1863 644.2V642.3M1864 644.8V634.4M1865 644.1V638.9M1866 643.8V640.5M1867 644.0V638.8M1868 643.7V638.9M1869 643.8V631.0M1870 644.3V631.0M1871 644.6V626.4M1872 643.9V640.7M1873 643.7V640.4M1874 643.9V640.4M1875 644.6V640.0M1876 644.0V639.4M1877 644.0V639.7M1878 644.2V638.1M1879 644.5V636.8M1880 644.5V631.2M1881 644.6V633.6M1882 643.9V625.6M1883 644.3V609.0M1884 644.7V633.0M1885 644.3V632.9M1886 644.6V632.5M1887 644.8V635.9M1888 644.6V623.2M1889 644.5V622.4M1890 644.2V626.0M1891 644.2V609.7M1892 644.6V624.3M1893 643.8V630.6M1894 643.9V631.6M1895 643.7V614.5M1896 644.6V629.9M1897 644.6V631.5M1898 643.7V627.6M1899 644.4V636.5M1900 644.7V617.7M1901 644.2V633.4M1902 644.1V636.3M1903 644.5V624.9M1904 644.2V616.6M1905 643.9V605.4M1906 644.4V605.7M1907 643.9V634.3M1908 644.7V617.7M1909 644.8V629.8M1910 644.7V625.8M1911 644.5V631.6M1912 644.4V634.4M1913 644.4V618.5M1914 644.2V637.5M1915 644.4V628.2M1916 644.1V637.4M1917 644.0V585.8M1918 644.5V623.0M1919 644.1V634.8M1920 644.5V616.1M1921 644.7V630.2M1922 644.2V631.3M1923 644.2V631.1M1924 644.5V633.6M1925 644.3V628.9M1926 644.3V612.4M1927 643.8V633.5M1928 644.5V632.8M1929 643.6V634.4M1930 643.6V623.1M1931 643.7V632.1M1932 644.0V626.9M1933 644.6V632.0M1934 644.6V620.4M1935 644.7V631.0M1936 644.2V640.9M1937 644.3V641.2M1938 643.8V638.7M1939 644.0V639.2M1940 643.8V637.1M1941 644.2V631.8M1942 643.7V638.2M1943 643.7V636.3M1944 643.7V638.9M1945 644.2V639.5M1946 644.4V637.3M1947 643.8V640.6M1948 643.7V635.1M1949 644.5V638.9M1950 643.9V641.5M1951 644.7V640.5M1952 644.5V638.8M1953 643.7V638.9M1954 644.3V638.1M1955 643.8V641.7M1956 644.6V640.7M1957 644.2V634.6M1958 643.9V639.3M1959 643.9V638.8M1960 644.1V641.6M1961 644.8V641.8M1962 643.7V643.6M1963 644.6V643.7M1964 644.8V642.8M1965 644.7V640.3M1966 644.1V643.6M1967 644.5V643.0M1968 643.6V642.3M1969 644.2V643.4M1970 644.5V642.8M1971 644.7V643.3M1972 644.0V643.6M1973 644.2V643.1M1974 644.0V643.1M1975 644.4V643.7M1976 644.8V638.8M1977 643.9V643.9M1978 644.0V634.7M1979 644.2V642.7M1980 644.3V640.8M1981 644.4V643.4M1982 644.7V644.0M1983 644.3V643.4M1984 643.7V643.0M1985 644.1V643.2M1986 644.0V642.1M1987 643.6V642.3M1988 644.4V643.5M1989 643.8V641.3M1990 644.4V642.8M1991 644.2V642.4M1992 644.8V643.6M1993 644.8V642.2M1994 643.8V641.5M1995 643.8V642.3M1996 643.8V642.3M1997 644.7V643.6M1998 643.9V643.6M1999 643.7V643.4M2000 644.6V643.1M2001 644.2V641.9M2002 644.7V644.6M2003 644.4V643.3M2004 644.4V643.0M2005 644.7V643.2M2006 644.5V642.3M2007 643.7V643.5M2008 643.9V643.4M2009 644.3V643.5M2010 644.1V639.5M2011 643.9V641.8M2012 644.1V642.4M2013 644.0V643.1M2014 643.6V642.6M2015 643.6V642.1M2016 643.7V643.3M2017 643.8V643.1M2018 644.2V641.9M2019 643.9V641.8M2020 644.7V637.8M2021 644.1V643.4M2022 644.0V642.8M2023 644.3V641.3M2024 644.3V643.0M2025 644.2V642.5M2026 644.6V642.3M2027 644.7V643.1M2028 644.0V641.8M2029 644.5V643.5M2030 644.4V640.9M2031 644.4V643.4M2032 644.4V642.2M2033 644.2V642.4M2034 644.2V642.8M2035 644.5V642.4M2036 644.0V642.6M2037 643.6V643.5M2038 644.0V643.5M2039 644.7V643.6M2040 644.7V642.7M2041 644.5V641.8M2042 644.4V641.4M2043 644.0V643.2M2044 644.2V641.2M2045 644.1V643.8M2046 644.3V642.5M2047 644.7V642.0M2048 643.8V642.7M2049 643.6V643.9M2050 643.7V643.5M2051 644.4V644.1M2052 644.1V644.0M2053 643.9V643.4M2054 644.0V643.5M2055 644.7V644.1M2056 644.8V643.2M2057 644.8V641.6M2058 644.0V643.0M2059 644.4V641.1M2060 644.8V643.3M2061 644.0V644.1M2062 644.5V643.2M2063 644.8V644.0M2064 643.8V643.3M2065 644.5V642.0M2066 644.5V643.2M2067 644.8V640.6M2068 643.9V643.0M2069 644.5V643.0M2070 643.9V630.2M2071 644.7V638.0M2072 643.8V639.8M2073 644.3V632.7M2074 644.2V635.7M2075 644.7V640.0M2076 644.0V639.1M2077 644.2V639.5M2078 643.8V637.6M2079 644.3V637.6M2080 644.0V639.0M2081 644.3V639.5M2082 644.4V631.3M2083 644.0V639.3M2084 644.8V635.5M2085 643.8V628.4M2086 644.6V639.4M2087 643.8V640.8M2088 644.1V622.7M2089 643.8V640.4M2090 643.7V632.7M2091 644.1V641.6M2092 644.0V637.1M2093 644.2V634.5M2094 643.8V640.3M2095 644.3V634.2M2096 644.4V639.4M2097 643.8V638.8M2098 644.8V634.6M2099 644.2V639.3M2100 644.4V615.7M2101 644.2V634.3M2102 644.0V640.7M2103 644.4V635.2M2104 643.9V634.8M2105 644.5V639.4M2106 643.8V636.2M2107 644.6V638.2M2108 643.7V626.5M2109 644.1V640.2M2110 643.9V638.3M2111 644.0V637.7M2112 643.7V634.7M2113 644.5V635.8M2114 643.7V634.4M2115 644.6V638.2M2116 644.3V638.7M2117 643.7V637.6M2118 643.9V638.4M2119 644.8V632.4M2120 643.7V638.4M2121 644.5V638.0M2122 644.4V639.6M2123 644.4V636.8M2124 643.8V639.4M2125 644.0V640.4M2126 643.6V640.0M2127 643.6V639.2M2128 644.6V624.0M2129 644.7V639.0M2130 643.7V641.1M2131 644.3V640.1M2132 644.6V639.0M2133 643.6V641.1M2134 644.6V639.2M2135 643.8V637.8M2136 644.4V636.5M2137 643.7V640.2M2138 643.8V640.5M2139 644.1V638.8M2140 644.0V616.8M2141 644.3V637.0M2142 644.1V635.2M2143 643.8V629.9M2144 643.8V639.6M2145 643.9V640.8M2146 644.6V629.0M2147 643.7V637.7M2148 644.2V642.6M2149 644.7V640.7M2150 644.2V636.1M2151 644.6V639.3M2152 644.1V632.4M2153 644.6V638.7M2154 644.5V640.1M2155 644.1V635.0M2156 644.0V626.0M2157 643.7V637.4M2158 644.1V630.7M2159 644.1V639.2M2160 644.5V628.2M2161 644.0V637.7M2162 644.7V639.9M2163 644.1V636.9M2164 644.3V640.4M2165 644.4V635.9M2166 644.1V634.0M2167 644.4V636.7M2168 644.5V633.8M2169 644.4V638.8M2170 644.6V638.4M2171 643.7V640.2M2172 644.2V639.5M2173 643.9V635.1M2174 644.2V638.6M2175 644.4V638.5M2176 643.9V616.5M2177 643.9V638.6M2178 643.8V621.4M2179 643.7V635.2M2180 644.3V642.3M2181 644.0V631.9M2182 644.8V640.0M2183 644.2V641.0M2184 644.4V616.8M2185 644.1V638.0M2186 643.9V635.0M2187 644.3V638.1M2188 644.7V639.3M2189 643.6V636.2M2190 644.8V637.8M2191 643.8V638.7M2192 644.6V635.5M2193 643.6V639.1M2194 644.6V637.3M2195 644.0V637.9M2196 643.8V619.5M2197 644.3V640.0M2198 644.7V638.8M2199 644.6V629.9M2200 644.5V635.3M2201 644.0V623.3M2202 644.7V639.3M2203 644.5V639.4M2204 644.0V636.6M2205 643.7V638.8M2206 644.0V637.4M2207 644.6V630.7M2208 643.7V638.1M2209 643.6V638.9M2210 644.6V639.9M2211 644.8V624.5M2212 644.5V640.8M2213 643.6V631.2M2214 643.6V618.2M2215 644.6V640.3M2216 643.8V636.2M2217 644.7V641.8M2218 643.6V593.0M2219 643.6V624.6M2220 644.7V634.7M2221 644.8V622.4M2222 644.5V641.0M2223 644.1V635.1M2224 644.5V638.8M2225 644.0V640.2M2226 644.4V639.5M2227 644.4V639.6M2228 644.4V635.5M2229 644.7V633.0M2230 643.8V621.5M2231 643.8V638.8M2232 644.3V639.6M2233 644.3V637.3M2234 643.6V604.0M2235 644.4V637.7M2236 644.2V638.0M2237 643.7V629.1M2238 644.4V638.2M2239 644.0V638.6M2240 644.5V636.4M2241 644.0V616.5M2242 644.3V640.1M2243 644.7V634.4M2244 644.5V639.8M2245 643.7V608.1M2246 644.0V640.2M2247 644.6V637.2M2248 644.0V639.3M2249 644.3V629.9M2250 644.0V639.4M2251 644.3V639.2M2252 644.3V640.4M2253 644.6V633.2M2254 643.6V640.4M2255 644.5V639.2M2256 644.5V640.3M2257 644.3V633.3M2258 643.9V634.7M2259 644.1V633.2M2260 644.6V626.4M2261 644.5V638.4M2262 644.6V639.5M2263 644.6V636.6M2264 644.1V637.6M2265 643.9V639.0M2266 644.0V629.0M2267 643.7V640.5M2268 643.9V615.3M2269 644.0V642.4M2270 643.6V633.9M2271 643.7V639.7M2272 644.3V638.3M2273 644.8V640.0M2274 644.6V637.9M2275 643.7V638.3M2276 644.2V639.0M2277 644.8V640.9M2278 644.3V640.7M2279 644.7V637.9M2280 644.0V628.4M2281 643.7V634.7M2282 643.6V640.0M2283 643.7V640.3M2284 644.6V637.2M2285 644.1V637.4M2286 644.3V640.4M2287 643.8V640.7M2288 643.9V640.3M2289 644.5V639.9M2290 644.2V643.4M2291 644.3V642.8M2292 644.6V641.4M2293 643.6V642.6M2294 643.7V639.9M2295 644.8V643.5M2296 643.8V619.8M2297 644.1V641.5M2298 644.1V643.1M2299 643.9V642.5M2300 644.3V642.6M2301 643.9V642.8M2302 644.4V643.4M2303 644.5V643.2M2304 644.3V643.1M2305 644.2V640.4M2306 643.7V643.0M2307 644.4V638.8M2308 643.6V641.1M2309 643.9V642.5M2310 643.8V640.8M2311 643.7V642.9M2312 643.7V641.5M2313 644.5V642.6M2314 644.1V578.9M2315 644.3V643.1M2316 644.2V643.7M2317 644.3V643.2M2318 643.7V640.5M2319 644.4V643.3M2320 644.0V643.5M2321 643.8V640.9M2322 644.4V639.9M2323 644.4V642.1M2324 644.0V641.8M2325 644.6V640.2M2326 643.9V642.4M2327 644.7V640.3M2328 644.7V642.4M2329 644.7V643.7M2330 644.4V642.2M2331 644.2V640.8M2332 644.0V641.8M2333 643.9V644.3M2334 644.3V643.0M2335 644.7V643.8M2336 644.1V641.5M2337 644.4V643.9M2338 643.8V641.9M2339 644.4V643.4M2340 643.7V644.6M2341 644.3V642.1M2342 644.7V639.1M2343 644.0V642.7M2344 644.6V643.1M2345 643.6V641.4M2346 644.0V642.9M2347 644.3V642.3M2348 644.0V643.4M2349 644.6V642.0M2350 644.5V643.8M2351 644.6V643.7M2352 644.1V642.4M2353 643.8V643.0M2354 644.4V639.8M2355 644.7V642.4M2356 644.4V643.5M2357 644.1V641.8M2358 644.0V640.6M2359 643.9V642.8M2360 644.6V640.7M2361 644.6V642.4M2362 644.7V637.2M2363 644.7V643.1M2364 644.2V641.7M2365 644.6V642.9M2366 643.8V642.7M2367 644.6V643.4M2368 644.4V641.6M2369 644.2V632.7M2370 644.1V642.2M2371 643.7V642.4M2372 643.6V641.7M2373 644.3V641.5M2374 643.9V635.9M2375 644.0V642.7M2376 644.4V642.2M2377 644.2V643.0M2378 643.7V642.5M2379 643.9V642.1M2380 644.7V642.8M2381 644.8V641.3M2382 644.4V640.8M2383 644.5V640.0M2384 644.0V643.6M2385 643.6V642.4M2386 644.6V642.0M2387 644.6V641.8M2388 644.4V642.4M2389 644.6V644.0M2390 643.6V642.9M2391 644.2V643.1M2392 644.3V639.1M2393 644.2V643.3M2394 644.6V644.1M2395 643.8V642.1M2396 644.1V642.3M2397 644.8V642.2M2398 643.9V641.7M2399 644.8V641.6M2400 643.8V642.2M2401 643.9V637.2M2402 644.3V641.6M2403 643.8V642.5M2404 643.9V643.2M2405 644.0V641.5M2406 644.4V642.2M2407 643.7V639.7M2408 644.0V641.0M2409 644.4V643.3M2410 644.2V641.1M2411 644.7V637.4M2412 643.9V640.2M2413 644.4V636.9M2414 644.7V639.5M2415 643.7V639.0M2416 644.6V640.9M2417 643.6V639.1M2418 644.2V636.7M2419 643.7V639.2M2420 643.9V641.0M2421 644.2V640.0M2422 643.7V643.7M2423 643.8V639.3M2424 643.8V634.7M2425 644.0V635.1M2426 644.0V638.7M2427 643.6V638.5M2428 644.0V636.6M2429 643.8V640.6M2430 644.5V639.1M2431 643.6V637.3M2432 644.0V639.1M2433 644.0V634.1M2434 643.9V640.8M2435 643.7V626.4M2436 644.3V641.2M2437 644.3V641.8M2438 643.7V638.3M2439 644.8V639.4M2440 644.5V641.2M2441 643.8V617.3M2442 644.3V640.0M2443 644.2V641.3M2444 643.7V638.6M2445 644.1V641.1M2446 644.4V638.8M2447 644.8V639.2M2448 644.1V640.2M2449 644.0V641.3M2450 644.7V637.7M2451 644.0V627.9M2452 644.7V641.4M2453 644.3V640.9M2454 644.5V640.0M2455 644.3V638.5M2456 643.9V639.1M2457 644.4V637.3M2458 644.6V637.4M2459 643.9V633.1M2460 644.5V641.4M2461 644.7V638.3M2462 644.2V638.7M2463 644.6V638.2M2464 644.6V639.3M2465 643.7V639.7M2466 644.6V636.0M2467 644.8V635.8M2468 643.9V640.7M2469 644.0V638.5" fill="none" stroke="#5cdd8b" stroke-width="2.4" stroke-linecap="round"/><g font-family="Liberation Sans, sans-serif" font-size="10" fill="#666"><text x="110.6" y="649.9" text-anchor="end">0</text><text x="110.6" y="633.1" text-anchor="end">5,000</text><text x="110.6" y="616.3" text-anchor="end">10,000</text><text x="110.6" y="599.6" text-anchor="end">15,000</text><text x="110.6" y="582.8" text-anchor="end">20,000</text><text x="110.6" y="566.0" text-anchor="end">25,000</text><text x="110.6" y="549.2" text-anchor="end">30,000</text><text x="110.6" y="532.4" text-anchor="end">35,000</text><text x="110.6" y="515.7" text-anchor="end">40,000</text><text x="110.6" y="498.9" text-anchor="end">45,000</text><text x="141.3" y="664.2" text-anchor="middle">01-09 16:00</text><text x="224.9" y="664.2" text-anchor="middle">01-09 22:00</text><text x="308.6" y="664.2" text-anchor="middle">01-10 04:00</text><text x="392.2" y="664.2" text-anchor="middle">01-10 10:00</text><text x="475.8" y="664.2" text-anchor="middle">01-10 16:00</text><text x="559.5" y="664.2" text-anchor="middle">01-10 22:00</text><text x="643.1" y="664.2" text-anchor="middle">01-11 04:00</text><text x="726.7" y="664.2" text-anchor="middle">01-11 10:00</text><text x="810.3" y="664.2" text-anchor="middle">01-11 16:00</text><text x="894.0" y="664.2" text-anchor="middle">01-11 22:00</text><text x="977.6" y="664.2" text-anchor="middle">01-12 04:00</text><text x="1061.2" y="664.2" text-anchor="middle">01-12 10:00</text><text x="1144.9" y="664.2" text-anchor="middle">01-12 16:00</text><text x="1228.5" y="664.2" text-anchor="middle">01-12 22:00</text><text x="1312.1" y="664.2" text-anchor="middle">01-13 04:00</text><text x="1395.7" y="664.2" text-anchor="middle">01-13 10:00</text><text x="1479.4" y="664.2" text-anchor="middle">01-13 16:00</text><text x="1563.0" y="664.2" text-anchor="middle">01-13 22:00</text><text x="1646.6" y="664.2" text-anchor="middle">01-14 04:00</text><text x="1730.3" y="664.2" text-anchor="middle">01-14 10:00</text><text x="1813.9" y="664.2" text-anchor="middle">01-14 16:00</text><text x="1897.5" y="664.2" text-anchor="middle">01-14 22:00</text><text x="1981.2" y="664.2" text-anchor="middle">01-15 04:00</text><text x="2064.8" y="664.2" text-anchor="middle">01-15 10:00</text><text x="2148.4" y="664.2" text-anchor="middle">01-15 16:00</text><text x="2232.1" y="664.2" text-anchor="middle">01-15 22:00</text><text x="2315.7" y="664.2" text-anchor="middle">01-16 04:00</text><text x="2399.3" y="664.2" text-anchor="middle">01-16 10:00</text></g><text transform="translate(71.5,570.7) rotate(-90)" text-anchor="middle" font-family="Liberation Sans, sans-serif" font-size="10" fill="#555" stroke="#555" stroke-width="0.25">响应时间（毫秒）</text></svg>
<div class="abs" style="left:2445px;top:467px;font-size:12px;line-height:16px;color:#666">1w</div>
<svg class="abs" style="left:2469px;top:474px" width="7" height="4"><path d="M0 0h6L3 3.2z" fill="#444"/></svg>
<div class="abs" style="left:2380px;top:440px;width:113px;height:53.6px;border:5px solid #ff4d62;border-radius:8px"></div>

<div class="th" style="left:57.5px">状态</div>
<div class="th" style="left:321px">日期时间</div>
<div class="th" style="left:791.5px">消息</div>
<div class="badge bu" style="top:796.0px">正常</div><div class="td" style="left:321px;top:795.2px">2025-01-16 08:47:43</div><div class="td" style="left:791.5px;top:795.2px">200 - OK</div><div class="badge bd" style="top:827.1px">故障</div><div class="td" style="left:321px;top:826.3px">2025-01-16 08:39:11</div><div class="td" style="left:791.5px;top:826.3px">Client network socket disconnected before secure TLS connection was established</div><div class="badge bu" style="top:858.3px">正常</div><div class="td" style="left:321px;top:857.5px">2025-01-14 14:10:04</div><div class="td" style="left:791.5px;top:857.5px">200 - OK</div><div class="badge bd" style="top:889.4px">故障</div><div class="td" style="left:321px;top:888.6px">2025-01-14 14:07:22</div><div class="td" style="left:791.5px;top:888.6px">timeout of 24000ms exceeded</div><div class="badge bu" style="top:920.6px">正常</div><div class="td" style="left:321px;top:919.8px">2025-01-13 07:11:53</div><div class="td" style="left:791.5px;top:919.8px">200 - OK</div><div class="badge bd" style="top:951.7px">故障</div><div class="td" style="left:321px;top:950.9px">2025-01-13 07:03:21</div><div class="td" style="left:791.5px;top:950.9px">Client network socket disconnected before secure TLS connection was established</div><div class="badge bu" style="top:982.8px">正常</div><div class="td" style="left:321px;top:982.0px">2025-01-12 17:50:36</div><div class="td" style="left:791.5px;top:982.0px">200 - OK</div><div class="badge bd" style="top:1014.0px">故障</div><div class="td" style="left:321px;top:1013.2px">2025-01-12 17:41:38</div><div class="td" style="left:791.5px;top:1013.2px">Client network socket disconnected before secure TLS connection was established</div><div class="badge bu" style="top:1045.1px">正常</div><div class="td" style="left:321px;top:1044.3px">2025-01-12 10:47:06</div><div class="td" style="left:791.5px;top:1044.3px">200 - OK</div><div class="badge bd" style="top:1076.3px">故障</div><div class="td" style="left:321px;top:1075.5px">2025-01-12 10:38:33</div><div class="td" style="left:791.5px;top:1075.5px">Client network socket disconnected before secure TLS connection was established</div><div class="badge bu" style="top:1107.4px">正常</div><div class="td" style="left:321px;top:1106.6px">2025-01-12 06:40:02</div><div class="td" style="left:791.5px;top:1106.6px">200 - OK</div><div class="badge bd" style="top:1138.5px">故障</div><div class="td" style="left:321px;top:1137.7px">2025-01-12 06:38:38</div><div class="td" style="left:791.5px;top:1137.7px">timeout of 24000ms exceeded</div><div class="badge bu" style="top:1169.7px">正常</div><div class="td" style="left:321px;top:1168.9px">2025-01-11 20:34:29</div><div class="td" style="left:791.5px;top:1168.9px">200 - OK</div><div class="badge bd" style="top:1200.8px">故障</div><div class="td" style="left:321px;top:1200.0px">2025-01-11 20:33:35</div><div class="td" style="left:791.5px;top:1200.0px">Client network socket disconnected before secure TLS connection was established</div><div class="badge bu" style="top:1232.0px">正常</div><div class="td" style="left:321px;top:1231.2px">2025-01-08 09:21:31</div><div class="td" style="left:791.5px;top:1231.2px">200 - OK</div>
<div class="abs" style="left:2397px;top:730px;width:102px;height:24px;border:1px solid #dc3545;border-radius:13px;color:#dc3545;font-size:11.9px;line-height:24px;white-space:nowrap">
  <svg class="abs" style="left:16px;top:6.5px" width="10" height="11" viewBox="0 0 12 13"><path d="M3.6 0.9L4 0h4l.4.9H11.5v1.5H.5V.9z" fill="#dc3545"/><path d="M1.3 3.2h9.4l-.6 9c0 .5-.4.8-.9.8H2.8c-.5 0-.9-.3-.9-.8z" fill="#dc3545"/></svg>
  <span class="abs" style="left:30px;top:0">清除数据</span>
  <svg class="abs" style="left:79px;top:10.5px" width="7" height="4"><path d="M0 0h5.6L2.8 3.2z" fill="#dc3545"/></svg>
</div>
<div class="abs" style="left:10px;top:1235px;font-family:'Liberation Serif',serif;font-size:21.5px;line-height:24px;color:#ff5a2a;white-space:nowrap;-webkit-text-stroke:0.35px #ff5a2a">QC</div>
<svg class="abs" style="left:0;top:1220px" width="100" height="50" viewBox="0 1220 100 50" fill="none" stroke="#ff5a2a" stroke-linecap="round" stroke-linejoin="round">
<path d="M43.8 1250.4 C47 1249.5 52 1246 56.4 1242" stroke-width="3"/>
<path d="M48.8 1239.2 C50.2 1242 51 1248 50.6 1252.6 C50.6 1254.4 52.5 1254.6 55 1253.6 C57.5 1252.8 59.5 1252 61 1251.2" stroke-width="3.2"/>
<path d="M65.8 1241.6 C69 1240.6 74 1238.6 77.8 1236.6" stroke-width="1.1"/>
<path d="M68.2 1242.6 L69 1244.6 L72.6 1243.6 L71.8 1241.8" stroke-width="1"/>
<path d="M66.4 1245.6 C70 1245 75 1244.2 79.4 1243.2" stroke-width="1.2"/>
<path d="M73.8 1239.2 C74.4 1244 74.6 1250 74.8 1257" stroke-width="1"/>
<path d="M67.6 1250 L68.6 1252.4 L72 1251.2 L71.2 1248.8 Z" stroke-width="1"/>
<path d="M67.8 1248.6 L66.8 1255.4" stroke-width="1"/>
</svg>
</div>
</body></html>
